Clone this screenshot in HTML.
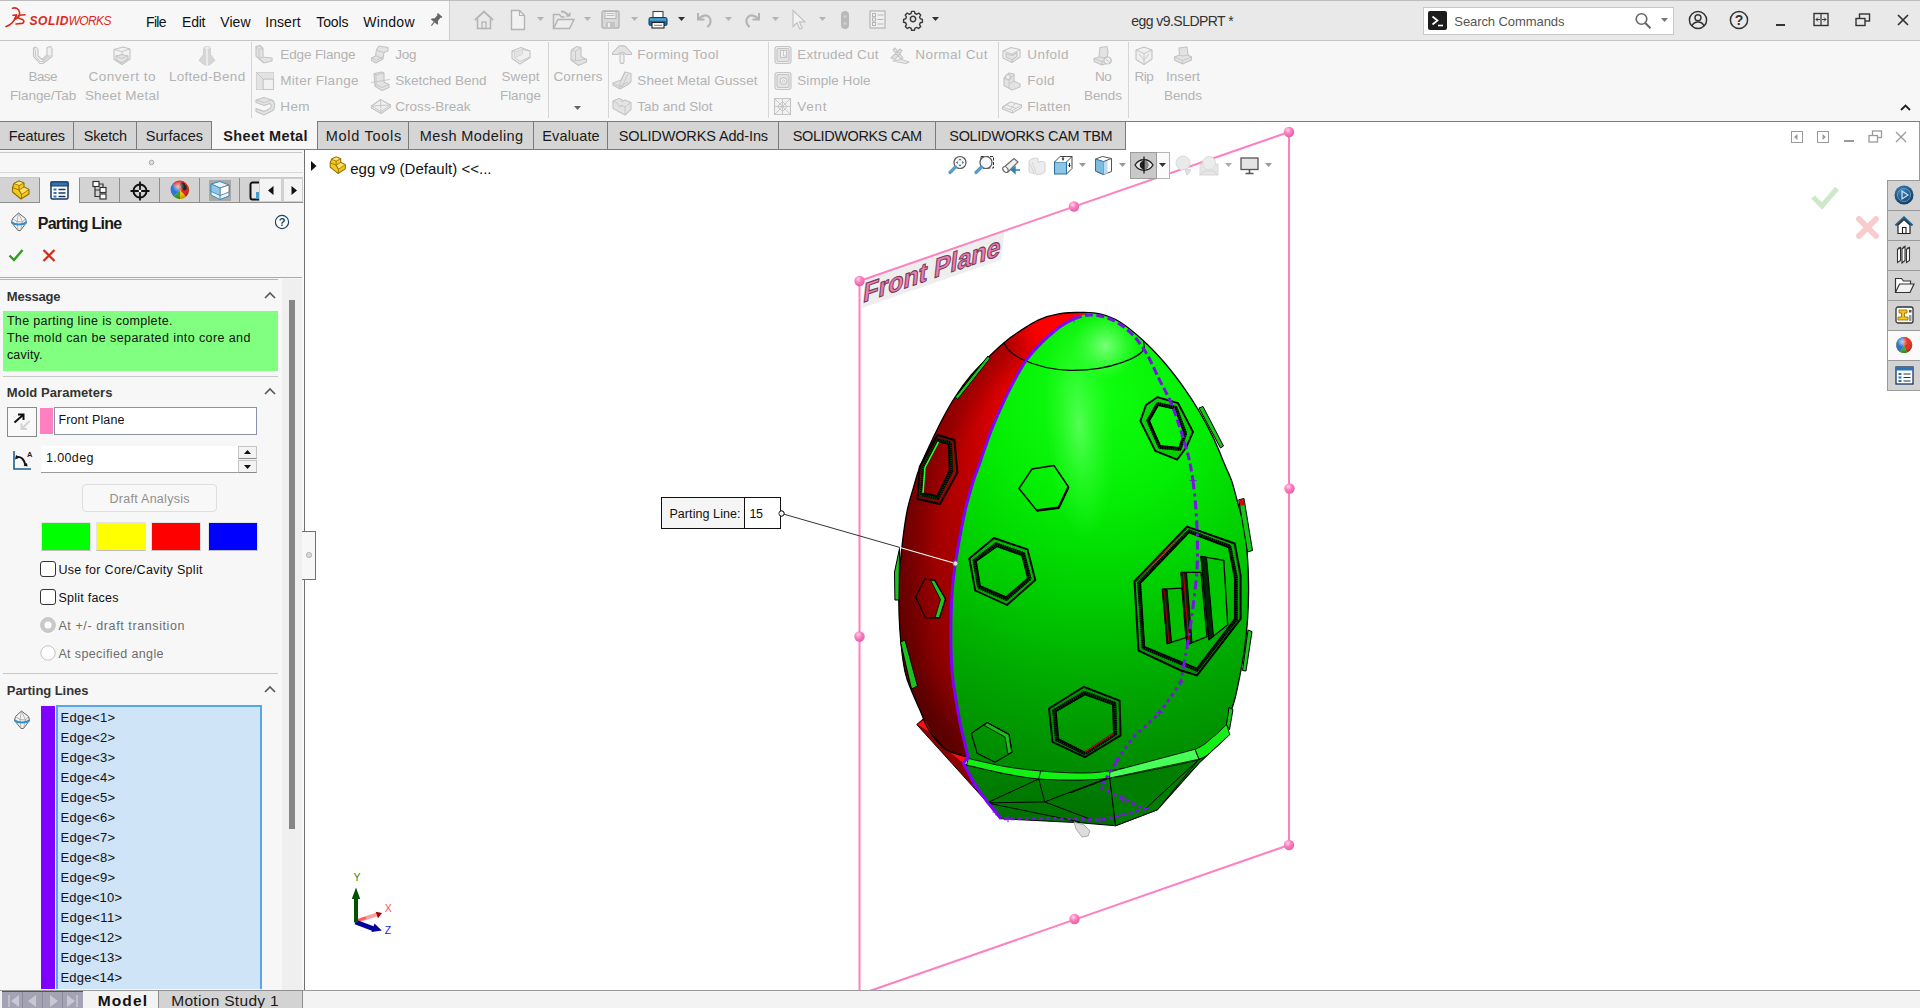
<!DOCTYPE html>
<html lang="en"><head><meta charset="utf-8"><title>SOLIDWORKS - egg v9.SLDPRT</title>
<style>
html,body{margin:0;padding:0;}
body{width:1920px;height:1008px;overflow:hidden;background:#fff;position:relative;font-family:"Liberation Sans",sans-serif;}
.r{position:absolute;display:block;}
.t{position:absolute;white-space:nowrap;}
svg{overflow:visible;}
</style></head>
<body>
<!-- viewport graphics -->
<div class="t" style="left:862px;top:279.800px;font-size:26.5px;line-height:28px;font-weight:bold;color:#f27cb4;-webkit-text-stroke:1.100px #6e4058;background:#eeeeee;transform-origin:0 100%;transform:skewY(-19.100deg) scaleX(0.940) skewX(-7deg);padding:0 2px 0 0;">Front Plane</div>
<svg class="r" style="left:0;top:0" width="1920" height="1008" viewBox="0 0 1920 1008"><defs><radialGradient id="pk" cx=".38" cy=".32" r=".7"><stop offset="0" stop-color="#ffd6ec"/><stop offset=".45" stop-color="#ff80c0"/><stop offset="1" stop-color="#e060a8"/></radialGradient></defs><path d="M859.5,995V281L1289,132V845L859.5,994.500" fill="none" stroke="#ff80c0" stroke-width="2"/><circle cx="859.5" cy="281" r="5.200" fill="url(#pk)"/><circle cx="1289" cy="132" r="5.200" fill="url(#pk)"/><circle cx="1289" cy="845" r="5.200" fill="url(#pk)"/><circle cx="1074" cy="206.5" r="5.200" fill="url(#pk)"/><circle cx="1289.5" cy="488.5" r="5.200" fill="url(#pk)"/><circle cx="859.5" cy="636.5" r="5.200" fill="url(#pk)"/><circle cx="1074.5" cy="919" r="5.200" fill="url(#pk)"/><defs><radialGradient id="gG" gradientUnits="userSpaceOnUse" cx="1095" cy="395" r="430"><stop offset="0" stop-color="#10ff10"/><stop offset=".25" stop-color="#04ee04"/><stop offset=".48" stop-color="#00cc00"/><stop offset=".68" stop-color="#00a800"/><stop offset=".86" stop-color="#008e00"/><stop offset="1" stop-color="#007e00"/></radialGradient><radialGradient id="gH1" gradientUnits="userSpaceOnUse" cx="1105" cy="346" r="34"><stop offset="0" stop-color="#7aff7a"/><stop offset=".4" stop-color="#5cff5c" stop-opacity=".7"/><stop offset="1" stop-color="#40ff40" stop-opacity="0"/></radialGradient><radialGradient id="gH2" gradientUnits="userSpaceOnUse" cx="0" cy="0" r="1" gradientTransform="translate(1079 425) rotate(-4) scale(34 115)"><stop offset="0" stop-color="#60ff60" stop-opacity=".85"/><stop offset=".5" stop-color="#4cff4c" stop-opacity=".4"/><stop offset="1" stop-color="#3cff3c" stop-opacity="0"/></radialGradient><linearGradient id="gR" gradientUnits="userSpaceOnUse" x1="1060" y1="318" x2="900" y2="700"><stop offset="0" stop-color="#ff0000"/><stop offset=".07" stop-color="#ff0000"/><stop offset=".2" stop-color="#ea0000"/><stop offset=".34" stop-color="#cf0000"/><stop offset=".49" stop-color="#b60000"/><stop offset=".63" stop-color="#a80000"/><stop offset=".77" stop-color="#9a0000"/><stop offset=".93" stop-color="#8c0000"/><stop offset="1" stop-color="#820000"/></linearGradient><filter id="blr" x="-20%" y="-20%" width="140%" height="140%"><feGaussianBlur stdDeviation="13"/></filter><filter id="blg" x="-20%" y="-20%" width="140%" height="140%"><feGaussianBlur stdDeviation="16"/></filter><linearGradient id="gB" gradientUnits="userSpaceOnUse" x1="0" y1="765" x2="0" y2="826"><stop offset="0" stop-color="#008400"/><stop offset="1" stop-color="#006e00"/></linearGradient></defs><path d="M966.5,765.0L963.3,763.2L975.2,785.0L988.0,802.9L1001.0,818.7L1080.0,822.7L1115.6,825.7L1157.3,809.8L1199.0,763.2L1229.7,734.4L1229.7,734.4L1216.0,747.0L1199.0,759.2L1152.0,770.0L1109.7,778.0L1080.0,780.0L1038.7,779.0L1004.0,773.5L966.5,765.0Z" fill="url(#gB)" stroke="#000" stroke-width="1.100" stroke-linejoin="round"/><path d="M987,802.900L1038.700,779L1044.700,801.900ZM1044.700,801.900L1109.700,777L1115.600,825.700M1044.700,801.900L1090,819M987,802.900L1080,822M1197,761.200L1145.400,808.800L1115.600,825.700M1109.700,778L1070,793" fill="none" stroke="#000" stroke-width="1"/><path d="M1109.700,778L1199,759.200L1157.300,809.800L1115.600,825.700Z" fill="#007e00" stroke="#000" stroke-width="1"/><path d="M1197,761.200L1145.400,808.800" stroke="#000" stroke-width="1"/><path d="M1080.0,312.3C1076.4,312.6 1065.5,312.6 1058.6,313.9C1051.7,315.1 1045.3,316.8 1038.7,319.8C1032.1,322.8 1024.7,327.9 1018.9,331.7C1013.1,335.5 1009.3,338.2 1004.0,342.7C998.7,347.2 992.5,353.1 987.0,358.5C981.5,363.9 976.6,368.7 971.3,375.0C966.0,381.3 960.0,389.5 955.4,396.5C950.8,403.5 947.1,410.3 943.5,417.0C939.9,423.7 937.6,428.5 933.6,436.9C929.6,445.3 923.1,458.9 919.7,467.5C916.3,476.1 915.3,481.4 913.2,488.5C911.1,495.6 909.0,501.5 907.3,510.0C905.6,518.5 904.0,529.6 902.8,539.5C901.5,549.4 900.5,559.4 899.8,569.3C899.1,579.2 898.8,589.1 898.8,599.0C898.8,608.9 899.1,618.9 899.8,628.8C900.5,638.7 901.6,650.2 902.8,658.6C904.0,667.0 904.2,670.5 907.0,679.0C909.8,687.5 915.9,700.9 919.7,709.6C923.5,718.3 925.3,724.8 929.6,731.4C933.9,738.0 939.5,745.1 945.5,749.3C951.5,753.5 962.0,755.3 965.3,756.5L968.3,758.5C974.4,759.8 992.9,764.4 1005.0,766.5C1017.1,768.6 1028.2,769.9 1040.7,771.0C1053.2,772.1 1068.8,773.0 1080.0,773.0C1091.2,773.0 1096.3,772.8 1108.0,771.0C1119.7,769.2 1135.5,766.1 1150.0,762.5C1164.5,758.9 1184.5,753.5 1195.0,749.3C1205.5,745.0 1207.7,741.1 1213.0,737.0C1218.3,732.9 1224.4,726.6 1226.7,724.5C1227.0,723.3 1227.4,721.6 1228.7,717.5C1230.0,713.4 1232.7,707.3 1234.7,699.7C1236.7,692.1 1238.9,680.5 1240.6,672.0C1242.2,663.5 1243.4,657.6 1244.6,648.7C1245.8,639.9 1246.9,628.9 1247.6,618.9C1248.3,608.9 1248.6,598.9 1248.6,589.0C1248.6,579.1 1248.3,569.3 1247.6,559.4C1246.9,549.5 1246.4,539.5 1244.6,529.6C1242.8,519.7 1239.2,508.1 1237.0,500.0C1234.8,491.9 1233.7,486.9 1231.7,481.0C1229.7,475.1 1227.9,472.1 1224.8,464.7C1221.7,457.3 1217.2,445.8 1212.9,436.9C1208.6,427.9 1203.7,418.9 1199.0,411.0C1194.3,403.1 1190.6,397.2 1185.0,389.3C1179.4,381.4 1172.1,371.6 1165.2,363.5C1158.3,355.4 1151.0,347.6 1143.4,340.7C1135.8,333.8 1126.9,326.3 1119.6,321.8C1112.3,317.3 1106.4,315.5 1099.8,313.9C1093.2,312.3 1083.3,312.6 1080.0,312.3Z" fill="url(#gG)"/><path d="M1080.0,312.3C1076.4,312.6 1065.5,312.6 1058.6,313.9C1051.7,315.1 1045.3,316.8 1038.7,319.8C1032.1,322.8 1024.7,327.9 1018.9,331.7C1013.1,335.5 1009.3,338.2 1004.0,342.7C998.7,347.2 992.5,353.1 987.0,358.5C981.5,363.9 976.6,368.7 971.3,375.0C966.0,381.3 960.0,389.5 955.4,396.5C950.8,403.5 947.1,410.3 943.5,417.0C939.9,423.7 937.6,428.5 933.6,436.9C929.6,445.3 923.1,458.9 919.7,467.5C916.3,476.1 915.3,481.4 913.2,488.5C911.1,495.6 909.0,501.5 907.3,510.0C905.6,518.5 904.0,529.6 902.8,539.5C901.5,549.4 900.5,559.4 899.8,569.3C899.1,579.2 898.8,589.1 898.8,599.0C898.8,608.9 899.1,618.9 899.8,628.8C900.5,638.7 901.6,650.2 902.8,658.6C904.0,667.0 904.2,670.5 907.0,679.0C909.8,687.5 915.9,700.9 919.7,709.6C923.5,718.3 925.3,724.8 929.6,731.4C933.9,738.0 939.5,745.1 945.5,749.3C951.5,753.5 962.0,755.3 965.3,756.5L968.3,758.5C974.4,759.8 992.9,764.4 1005.0,766.5C1017.1,768.6 1028.2,769.9 1040.7,771.0C1053.2,772.1 1068.8,773.0 1080.0,773.0C1091.2,773.0 1096.3,772.8 1108.0,771.0C1119.7,769.2 1135.5,766.1 1150.0,762.5C1164.5,758.9 1184.5,753.5 1195.0,749.3C1205.5,745.0 1207.7,741.1 1213.0,737.0C1218.3,732.9 1224.4,726.6 1226.7,724.5C1227.0,723.3 1227.4,721.6 1228.7,717.5C1230.0,713.4 1232.7,707.3 1234.7,699.7C1236.7,692.1 1238.9,680.5 1240.6,672.0C1242.2,663.5 1243.4,657.6 1244.6,648.7C1245.8,639.9 1246.9,628.9 1247.6,618.9C1248.3,608.9 1248.6,598.9 1248.6,589.0C1248.6,579.1 1248.3,569.3 1247.6,559.4C1246.9,549.5 1246.4,539.5 1244.6,529.6C1242.8,519.7 1239.2,508.1 1237.0,500.0C1234.8,491.9 1233.7,486.9 1231.7,481.0C1229.7,475.1 1227.9,472.1 1224.8,464.7C1221.7,457.3 1217.2,445.8 1212.9,436.9C1208.6,427.9 1203.7,418.9 1199.0,411.0C1194.3,403.1 1190.6,397.2 1185.0,389.3C1179.4,381.4 1172.1,371.6 1165.2,363.5C1158.3,355.4 1151.0,347.6 1143.4,340.7C1135.8,333.8 1126.9,326.3 1119.6,321.8C1112.3,317.3 1106.4,315.5 1099.8,313.9C1093.2,312.3 1083.3,312.6 1080.0,312.3Z" fill="url(#gH2)"/><path d="M1080.0,312.3C1076.4,312.6 1065.5,312.6 1058.6,313.9C1051.7,315.1 1045.3,316.8 1038.7,319.8C1032.1,322.8 1024.7,327.9 1018.9,331.7C1013.1,335.5 1009.3,338.2 1004.0,342.7C998.7,347.2 992.5,353.1 987.0,358.5C981.5,363.9 976.6,368.7 971.3,375.0C966.0,381.3 960.0,389.5 955.4,396.5C950.8,403.5 947.1,410.3 943.5,417.0C939.9,423.7 937.6,428.5 933.6,436.9C929.6,445.3 923.1,458.9 919.7,467.5C916.3,476.1 915.3,481.4 913.2,488.5C911.1,495.6 909.0,501.5 907.3,510.0C905.6,518.5 904.0,529.6 902.8,539.5C901.5,549.4 900.5,559.4 899.8,569.3C899.1,579.2 898.8,589.1 898.8,599.0C898.8,608.9 899.1,618.9 899.8,628.8C900.5,638.7 901.6,650.2 902.8,658.6C904.0,667.0 904.2,670.5 907.0,679.0C909.8,687.5 915.9,700.9 919.7,709.6C923.5,718.3 925.3,724.8 929.6,731.4C933.9,738.0 939.5,745.1 945.5,749.3C951.5,753.5 962.0,755.3 965.3,756.5L968.3,758.5C974.4,759.8 992.9,764.4 1005.0,766.5C1017.1,768.6 1028.2,769.9 1040.7,771.0C1053.2,772.1 1068.8,773.0 1080.0,773.0C1091.2,773.0 1096.3,772.8 1108.0,771.0C1119.7,769.2 1135.5,766.1 1150.0,762.5C1164.5,758.9 1184.5,753.5 1195.0,749.3C1205.5,745.0 1207.7,741.1 1213.0,737.0C1218.3,732.9 1224.4,726.6 1226.7,724.5C1227.0,723.3 1227.4,721.6 1228.7,717.5C1230.0,713.4 1232.7,707.3 1234.7,699.7C1236.7,692.1 1238.9,680.5 1240.6,672.0C1242.2,663.5 1243.4,657.6 1244.6,648.7C1245.8,639.9 1246.9,628.9 1247.6,618.9C1248.3,608.9 1248.6,598.9 1248.6,589.0C1248.6,579.1 1248.3,569.3 1247.6,559.4C1246.9,549.5 1246.4,539.5 1244.6,529.6C1242.8,519.7 1239.2,508.1 1237.0,500.0C1234.8,491.9 1233.7,486.9 1231.7,481.0C1229.7,475.1 1227.9,472.1 1224.8,464.7C1221.7,457.3 1217.2,445.8 1212.9,436.9C1208.6,427.9 1203.7,418.9 1199.0,411.0C1194.3,403.1 1190.6,397.2 1185.0,389.3C1179.4,381.4 1172.1,371.6 1165.2,363.5C1158.3,355.4 1151.0,347.6 1143.4,340.7C1135.8,333.8 1126.9,326.3 1119.6,321.8C1112.3,317.3 1106.4,315.5 1099.8,313.9C1093.2,312.3 1083.3,312.6 1080.0,312.3Z" fill="url(#gH1)"/><path d="M968.3,758.5C974.4,759.8 992.9,764.4 1005.0,766.5C1017.1,768.6 1028.2,769.9 1040.7,771.0C1053.2,772.1 1068.8,773.0 1080.0,773.0C1091.2,773.0 1096.3,772.8 1108.0,771.0C1119.7,769.2 1135.5,766.1 1150.0,762.5C1164.5,758.9 1184.5,753.5 1195.0,749.3C1205.5,745.0 1207.7,741.1 1213.0,737.0C1218.3,732.9 1224.4,726.6 1226.7,724.5L1229.7,734.4C1227.4,736.5 1221.1,742.9 1216.0,747.0C1210.9,751.1 1209.7,755.4 1199.0,759.2C1188.3,763.0 1166.9,766.9 1152.0,770.0C1137.1,773.1 1121.7,776.3 1109.7,778.0C1097.7,779.7 1091.8,779.8 1080.0,780.0C1068.2,780.2 1051.4,780.1 1038.7,779.0C1026.0,777.9 1016.0,775.8 1004.0,773.5C992.0,771.2 972.8,766.4 966.5,765.0Z" fill="#14f014" stroke="#000" stroke-width=".9" stroke-linejoin="round"/><path d="M1109.700,772L1195,749.300L1199,759.200L1109.700,778Z" fill="#48ff58" stroke="#000" stroke-width=".8"/><path d="M1040.700,771L1038.700,779M1195,749.300L1199,759.200" stroke="#000" stroke-width=".9"/><path d="M1088.0,313.2L1080.0,312.3C1076.4,312.6 1065.5,312.6 1058.6,313.9C1051.7,315.1 1045.3,316.8 1038.7,319.8C1032.1,322.8 1024.7,327.9 1018.9,331.7C1013.1,335.5 1009.3,338.2 1004.0,342.7C998.7,347.2 992.5,353.1 987.0,358.5C981.5,363.9 976.6,368.7 971.3,375.0C966.0,381.3 960.0,389.5 955.4,396.5C950.8,403.5 947.1,410.3 943.5,417.0C939.9,423.7 937.6,428.5 933.6,436.9C929.6,445.3 923.1,458.9 919.7,467.5C916.3,476.1 915.3,481.4 913.2,488.5C911.1,495.6 909.0,501.5 907.3,510.0C905.6,518.5 904.0,529.6 902.8,539.5C901.5,549.4 900.5,559.4 899.8,569.3C899.1,579.2 898.8,589.1 898.8,599.0C898.8,608.9 899.1,618.9 899.8,628.8C900.5,638.7 901.6,650.2 902.8,658.6C904.0,667.0 904.2,670.5 907.0,679.0C909.8,687.5 915.9,700.9 919.7,709.6C923.5,718.3 925.3,724.8 929.6,731.4C933.9,738.0 939.5,745.1 945.5,749.3C951.5,753.5 962.0,755.3 965.3,756.5L968.3,757.2C967.8,755.2 966.8,751.6 965.3,745.3C963.8,739.0 961.2,728.8 959.4,719.5C957.6,710.2 955.6,697.2 954.4,689.8C953.2,682.4 953.0,681.9 952.4,675.0C951.8,668.1 951.2,658.1 951.0,648.7C950.8,639.4 950.8,628.9 951.0,618.9C951.2,608.9 951.7,598.3 952.4,589.0C953.1,579.7 954.2,571.5 955.4,563.3C956.6,555.0 957.8,548.4 959.4,539.5C961.0,530.6 963.0,519.5 965.3,509.8C967.6,500.1 971.0,488.5 973.3,481.0C975.6,473.5 976.2,473.0 979.2,464.7C982.2,456.4 987.0,441.2 991.0,431.0C995.0,420.8 999.0,411.8 1003.0,403.2C1007.0,394.6 1010.9,386.7 1014.9,379.4C1018.9,372.1 1022.8,365.1 1026.8,359.5C1030.8,353.9 1033.4,350.9 1038.7,345.6C1044.0,340.3 1052.7,332.3 1058.6,327.8C1064.5,323.3 1069.1,321.2 1074.0,318.8C1078.9,316.4 1085.7,314.1 1088.0,313.2Z" fill="url(#gR)"/><clipPath id="cpR"><path d="M1088.0,313.2L1080.0,312.3C1076.4,312.6 1065.5,312.6 1058.6,313.9C1051.7,315.1 1045.3,316.8 1038.7,319.8C1032.1,322.8 1024.7,327.9 1018.9,331.7C1013.1,335.5 1009.3,338.2 1004.0,342.7C998.7,347.2 992.5,353.1 987.0,358.5C981.5,363.9 976.6,368.7 971.3,375.0C966.0,381.3 960.0,389.5 955.4,396.5C950.8,403.5 947.1,410.3 943.5,417.0C939.9,423.7 937.6,428.5 933.6,436.9C929.6,445.3 923.1,458.9 919.7,467.5C916.3,476.1 915.3,481.4 913.2,488.5C911.1,495.6 909.0,501.5 907.3,510.0C905.6,518.5 904.0,529.6 902.8,539.5C901.5,549.4 900.5,559.4 899.8,569.3C899.1,579.2 898.8,589.1 898.8,599.0C898.8,608.9 899.1,618.9 899.8,628.8C900.5,638.7 901.6,650.2 902.8,658.6C904.0,667.0 904.2,670.5 907.0,679.0C909.8,687.5 915.9,700.9 919.7,709.6C923.5,718.3 925.3,724.8 929.6,731.4C933.9,738.0 939.5,745.1 945.5,749.3C951.5,753.5 962.0,755.3 965.3,756.5L968.3,757.2C967.8,755.2 966.8,751.6 965.3,745.3C963.8,739.0 961.2,728.8 959.4,719.5C957.6,710.2 955.6,697.2 954.4,689.8C953.2,682.4 953.0,681.9 952.4,675.0C951.8,668.1 951.2,658.1 951.0,648.7C950.8,639.4 950.8,628.9 951.0,618.9C951.2,608.9 951.7,598.3 952.4,589.0C953.1,579.7 954.2,571.5 955.4,563.3C956.6,555.0 957.8,548.4 959.4,539.5C961.0,530.6 963.0,519.5 965.3,509.8C967.6,500.1 971.0,488.5 973.3,481.0C975.6,473.5 976.2,473.0 979.2,464.7C982.2,456.4 987.0,441.2 991.0,431.0C995.0,420.8 999.0,411.8 1003.0,403.2C1007.0,394.6 1010.9,386.7 1014.9,379.4C1018.9,372.1 1022.8,365.1 1026.8,359.5C1030.8,353.9 1033.4,350.9 1038.7,345.6C1044.0,340.3 1052.7,332.3 1058.6,327.8C1064.5,323.3 1069.1,321.2 1074.0,318.8C1078.9,316.4 1085.7,314.1 1088.0,313.2Z"/></clipPath><g clip-path="url(#cpR)"><path d="M1018.9,331.7C1016.4,333.5 1009.3,338.2 1004.0,342.7C998.7,347.2 992.5,353.1 987.0,358.5C981.5,363.9 976.6,368.7 971.3,375.0C966.0,381.3 960.0,389.5 955.4,396.5C950.8,403.5 947.1,410.3 943.5,417.0C939.9,423.7 937.6,428.5 933.6,436.9C929.6,445.3 923.1,458.9 919.7,467.5C916.3,476.1 915.3,481.4 913.2,488.5C911.1,495.6 909.0,501.5 907.3,510.0C905.6,518.5 904.0,529.6 902.8,539.5C901.5,549.4 900.5,559.4 899.8,569.3C899.1,579.2 898.8,589.1 898.8,599.0C898.8,608.9 899.1,618.9 899.8,628.8C900.5,638.7 901.6,650.2 902.8,658.6C904.0,667.0 904.2,670.5 907.0,679.0C909.8,687.5 915.9,700.9 919.7,709.6C923.5,718.3 925.3,724.8 929.6,731.4C933.9,738.0 939.5,745.1 945.5,749.3C951.5,753.5 962.0,755.3 965.3,756.5" fill="none" stroke="#000" stroke-opacity=".34" stroke-width="44" filter="url(#blr)"/></g><path d="M916.700,724.500L923.700,718.500L929.600,731.400L945.500,749.300L965.300,756.500L963.300,763.200L985,800Z" fill="#8c0000" stroke="#000" stroke-width=".9" stroke-linejoin="round"/><path d="M917.700,724.500L924.600,719.500L931.600,733.400Z" fill="#ff1010"/><path d="M947.500,750.300L967.300,757.200L963.300,763.200Z" fill="#ff1010"/><path d="M965.3,756.5C962.0,755.3 951.5,753.5 945.5,749.3C939.5,745.1 933.9,738.0 929.6,731.4C925.3,724.8 923.5,718.3 919.7,709.6C915.9,700.9 909.8,687.5 907.0,679.0C904.2,670.5 904.0,667.0 902.8,658.6C901.6,650.2 900.5,638.7 899.8,628.8C899.1,618.9 898.8,608.9 898.8,599.0C898.8,589.1 899.1,579.2 899.8,569.3C900.5,559.4 901.5,549.4 902.8,539.5C904.0,529.6 905.6,518.5 907.3,510.0C909.0,501.5 911.1,495.6 913.2,488.5C915.3,481.4 916.3,476.1 919.7,467.5C923.1,458.9 929.6,445.3 933.6,436.9C937.6,428.5 939.9,423.7 943.5,417.0C947.1,410.3 950.8,403.5 955.4,396.5C960.0,389.5 966.0,381.3 971.3,375.0C976.6,368.7 981.5,363.9 987.0,358.5C992.5,353.1 998.7,347.2 1004.0,342.7C1009.3,338.2 1013.1,335.5 1018.9,331.7C1024.7,327.9 1032.1,322.8 1038.7,319.8C1045.3,316.8 1051.7,315.1 1058.6,313.9C1065.5,312.6 1076.4,312.6 1080.0,312.3C1083.3,312.6 1093.2,312.3 1099.8,313.9C1106.4,315.5 1112.3,317.3 1119.6,321.8C1126.9,326.3 1135.8,333.8 1143.4,340.7C1151.0,347.6 1158.3,355.4 1165.2,363.5C1172.1,371.6 1179.4,381.4 1185.0,389.3C1190.6,397.2 1194.3,403.1 1199.0,411.0C1203.7,418.9 1208.6,427.9 1212.9,436.9C1217.2,445.8 1221.7,457.3 1224.8,464.7C1227.9,472.1 1229.7,475.1 1231.7,481.0C1233.7,486.9 1234.8,491.9 1237.0,500.0C1239.2,508.1 1242.8,519.7 1244.6,529.6C1246.4,539.5 1246.9,549.5 1247.6,559.4C1248.3,569.3 1248.6,579.1 1248.6,589.0C1248.6,598.9 1248.3,608.9 1247.6,618.9C1246.9,628.9 1245.8,639.9 1244.6,648.7C1243.4,657.6 1242.2,663.5 1240.6,672.0C1238.9,680.5 1236.7,692.1 1234.7,699.7C1232.7,707.3 1230.0,713.4 1228.7,717.5C1227.4,721.6 1227.0,723.3 1226.7,724.5" fill="none" stroke="#000" stroke-width="1.300"/><path d="M1004,342.700C1008,354 1030,368 1070,370.400C1112,371 1143,356 1144.400,347.600L1143.400,340.700" fill="none" stroke="#000" stroke-width="1.100"/><path d="M1157.3,397.2L1178.1,403.2L1193.0,431.9L1186.0,447.8L1177.1,459.7L1155.3,450.8L1140.4,421.0L1146.0,405.0ZM1158.3,405.2L1175.2,409.1L1184.0,432.9L1179.0,447.8L1160.3,445.8L1149.4,421.0Z" fill="#003000" fill-opacity=".16" fill-rule="evenodd"/><path d="M1157.3,397.2L1178.1,403.2L1193.0,431.9L1186.0,447.8L1177.1,459.7L1155.3,450.8L1140.4,421.0L1146.0,405.0Z" fill="none" stroke="#000" stroke-width="1.9" stroke-linejoin="round"/><path d="M1157.7,403.7L1175.8,407.6L1185.5,433.4L1179.8,449.2L1159.7,447.3L1147.9,420.5Z" fill="none" stroke="#064006" stroke-width="3.200" stroke-linejoin="round"/><path d="M1157.7,403.7L1175.8,407.6L1185.5,433.4L1179.8,449.2L1159.7,447.3L1147.9,420.5Z" fill="none" stroke="#000" stroke-width="3.200" stroke-linejoin="round" stroke-dasharray="1.300 .9"/><path d="M1158.3,405.2L1175.2,409.1L1184.0,432.9L1179.0,447.8L1160.3,445.8L1149.4,421.0Z" fill="none" stroke="#000" stroke-width="1.4" stroke-linejoin="round"/><path d="M1032.0,469.0L1054.0,465.5L1068.5,487.0L1058.6,507.8L1036.7,510.5L1019.0,488.5Z" fill="none" stroke="#000" stroke-width="1.400" stroke-linejoin="round"/><path d="M1036.700,510.500L1058.600,507.800L1068.500,487" fill="none" stroke="#000" stroke-width="2.400" stroke-linejoin="round"/><path d="M994.0,538.0L1027.5,549.4L1035.3,580.0L1007.0,605.0L975.2,590.5L969.3,558.5ZM997.0,546.5L1021.9,555.4L1027.8,578.2L1006.0,597.0L980.2,586.0L976.2,561.3Z" fill="#003000" fill-opacity=".16" fill-rule="evenodd"/><path d="M994.0,538.0L1027.5,549.4L1035.3,580.0L1007.0,605.0L975.2,590.5L969.3,558.5Z" fill="none" stroke="#000" stroke-width="1.9" stroke-linejoin="round"/><path d="M996.2,544.1L1023.5,553.7L1029.9,578.7L1006.3,599.2L978.8,587.3L974.3,560.5Z" fill="none" stroke="#064006" stroke-width="3.200" stroke-linejoin="round"/><path d="M996.2,544.1L1023.5,553.7L1029.9,578.7L1006.3,599.2L978.8,587.3L974.3,560.5Z" fill="none" stroke="#000" stroke-width="3.200" stroke-linejoin="round" stroke-dasharray="1.300 .9"/><path d="M997.0,546.5L1021.9,555.4L1027.8,578.2L1006.0,597.0L980.2,586.0L976.2,561.3Z" fill="none" stroke="#000" stroke-width="1.4" stroke-linejoin="round"/><path d="M937.5,435.0L954.4,440.0L957.4,472.6L940.0,504.0L917.5,499.0L919.7,466.7ZM938.5,441.9L948.5,443.8L949.4,470.6L937.0,496.0L923.0,493.0L925.0,467.5Z" fill="#003000" fill-opacity=".16" fill-rule="evenodd"/><path d="M937.5,435.0L954.4,440.0L957.4,472.6L940.0,504.0L917.5,499.0L919.7,466.7Z" fill="none" stroke="#000" stroke-width="1.9" stroke-linejoin="round"/><path d="M938.2,440.0L950.2,442.7L951.6,471.2L937.8,498.2L921.5,494.7L923.5,467.3Z" fill="none" stroke="#064006" stroke-width="3.200" stroke-linejoin="round"/><path d="M938.2,440.0L950.2,442.7L951.6,471.2L937.8,498.2L921.5,494.7L923.5,467.3Z" fill="none" stroke="#000" stroke-width="3.200" stroke-linejoin="round" stroke-dasharray="1.300 .9"/><path d="M938.5,441.9L948.5,443.8L949.4,470.6L937.0,496.0L923.0,493.0L925.0,467.5Z" fill="none" stroke="#000" stroke-width="1.4" stroke-linejoin="round"/><path d="M923,493L925,467.500L938.500,441.900" fill="none" stroke="#30ff30" stroke-width="1.600"/><path d="M934.600,580.200L945.500,599L939.500,617.900L935,617.900L940.500,599.500L930.500,580Z" fill="#1ec81e" stroke="#000" stroke-width=".8"/><path d="M924.6,579.2L934.6,580.2L945.5,599.0L939.5,617.9L925.6,617.9L915.7,597.0Z" fill="none" stroke="#000" stroke-width="1.200" stroke-linejoin="round"/><path d="M1083.9,686.8L1119.6,700.7L1120.6,735.4L1084.9,757.2L1052.5,742.0L1049.0,708.5ZM1084.9,694.7L1112.7,704.6L1113.7,733.4L1084.9,752.3L1058.5,739.0L1056.0,711.5Z" fill="#003000" fill-opacity=".16" fill-rule="evenodd"/><path d="M1083.9,686.8L1119.6,700.7L1120.6,735.4L1084.9,757.2L1052.5,742.0L1049.0,708.5Z" fill="none" stroke="#000" stroke-width="1.9" stroke-linejoin="round"/><path d="M1084.6,692.5L1114.6,703.5L1115.6,734.0L1084.9,753.7L1056.8,739.8L1054.0,710.7Z" fill="none" stroke="#064006" stroke-width="3.200" stroke-linejoin="round"/><path d="M1084.6,692.5L1114.6,703.5L1115.6,734.0L1084.9,753.7L1056.8,739.8L1054.0,710.7Z" fill="none" stroke="#000" stroke-width="3.200" stroke-linejoin="round" stroke-dasharray="1.300 .9"/><path d="M1084.9,694.7L1112.7,704.6L1113.7,733.4L1084.9,752.3L1058.5,739.0L1056.0,711.5Z" fill="none" stroke="#000" stroke-width="1.4" stroke-linejoin="round"/><path d="M1084.900,752.300L1113.700,733.400" stroke="#e00000" stroke-width="1.200"/><path d="M987,722.500L1009,734.400L1012,752.300L1008,754L1005,737L984.500,725.500Z" fill="#18c018" stroke="#000" stroke-width=".8"/><path d="M987.0,722.5L1009.0,734.4L1012.0,752.3L995.0,762.2L977.2,753.3L971.3,733.4Z" fill="none" stroke="#000" stroke-width="1.200" stroke-linejoin="round"/><path d="M1187.0,526.6L1234.7,543.5L1240.6,575.2L1240.6,618.9L1197.0,675.4L1181.0,670.5L1138.5,650.6L1134.5,581.2ZM1189.0,532.6L1228.7,547.5L1234.7,578.0L1234.7,618.9L1197.0,668.5L1144.4,646.7L1140.4,583.2Z" fill="#003000" fill-opacity=".16" fill-rule="evenodd"/><path d="M1187.0,526.6L1234.7,543.5L1240.6,575.2L1240.6,618.9L1197.0,675.4L1181.0,670.5L1138.5,650.6L1134.5,581.2Z" fill="none" stroke="#000" stroke-width="2.0" stroke-linejoin="round"/><path d="M1188.8,531.0L1229.6,546.2L1236.1,577.3L1236.1,619.7L1197.0,670.1L1143.3,647.8L1138.8,582.8Z" fill="none" stroke="#064006" stroke-width="3.200" stroke-linejoin="round"/><path d="M1188.8,531.0L1229.6,546.2L1236.1,577.3L1236.1,619.7L1197.0,670.1L1143.3,647.8L1138.8,582.8Z" fill="none" stroke="#000" stroke-width="3.200" stroke-linejoin="round" stroke-dasharray="1.300 .9"/><path d="M1189.0,532.6L1228.7,547.5L1234.7,578.0L1234.7,618.9L1197.0,668.5L1144.4,646.7L1140.4,583.2Z" fill="none" stroke="#000" stroke-width="1.5" stroke-linejoin="round"/><path d="M1162.300,589.100L1182,588.100L1186,637.700L1167.200,643.700Z" fill="#00c000" stroke="#000" stroke-width="1.300" stroke-linejoin="round"/><path d="M1181,572.300L1201,572.300L1207,636.700L1187,644.700Z" fill="#00c400" stroke="#000" stroke-width="1.300" stroke-linejoin="round"/><path d="M1201,556.400L1223.800,560.400L1227.700,624.800L1208.900,639.700Z" fill="#00c800" stroke="#000" stroke-width="1.300" stroke-linejoin="round"/><path d="M1162.300,589.100L1167,589.500L1171.500,642.300L1167.200,643.700Z" fill="#022402" stroke="#000" stroke-width="1"/><path d="M1181,572.300L1186.500,572.800L1192,643L1187,644.700Z" fill="#022402" stroke="#000" stroke-width="1"/><path d="M1201,556.400L1206.500,557.300L1213.500,636.500L1208.900,639.700Z" fill="#022402" stroke="#000" stroke-width="1"/><path d="M1183.500,574L1189,643" stroke="#c00000" stroke-width="1.200"/><path d="M1164.300,590L1169,643" stroke="#a00000" stroke-width="1"/><path d="M1136,582L1187.500,528.500" stroke="#c00000" stroke-width="1"/><path d="M988.0,356.0L955.4,397.0L957.5,399.5L990.0,358.5Z" fill="#18c818" stroke="#000" stroke-width="1" stroke-linejoin="round"/><path d="M899.5,548.5L894.5,572.0L894.9,600.0L899.0,600.0Z" fill="#20c020" stroke="#000" stroke-width="1" stroke-linejoin="round"/><path d="M900.5,642.0L905.0,640.0L917.5,686.0L911.5,689.0Z" fill="#20c020" stroke="#000" stroke-width="1" stroke-linejoin="round"/><path d="M1199.0,408.0L1203.0,406.5L1223.5,446.0L1220.5,448.0Z" fill="#18c818" stroke="#000" stroke-width="1" stroke-linejoin="round"/><path d="M1238.7,499.8L1244.0,498.5L1252.5,550.5L1247.5,552.0Z" fill="#18c818" stroke="#000" stroke-width="1" stroke-linejoin="round"/><path d="M1248.0,630.0L1252.0,631.5L1246.0,671.0L1242.5,670.5Z" fill="#18c818" stroke="#000" stroke-width="1" stroke-linejoin="round"/><path d="M1229.0,707.5L1233.0,709.5L1229.5,729.5L1226.5,724.5Z" fill="#18c818" stroke="#000" stroke-width="1" stroke-linejoin="round"/><path d="M1239.500,500L1243.500,499L1244.500,505L1240.500,506Z" fill="#e00000"/><path d="M1074.0,318.8C1071.4,320.3 1064.5,323.3 1058.6,327.8C1052.7,332.3 1044.0,340.3 1038.7,345.6C1033.4,350.9 1030.8,353.9 1026.8,359.5C1022.8,365.1 1018.9,372.1 1014.9,379.4C1010.9,386.7 1007.0,394.6 1003.0,403.2C999.0,411.8 995.0,420.8 991.0,431.0C987.0,441.2 982.2,456.4 979.2,464.7C976.2,473.0 975.6,473.5 973.3,481.0C971.0,488.5 967.6,500.1 965.3,509.8C963.0,519.5 961.0,530.6 959.4,539.5C957.8,548.4 956.6,555.0 955.4,563.3C954.2,571.5 953.1,579.7 952.4,589.0C951.7,598.3 951.2,608.9 951.0,618.9C950.8,628.9 950.8,639.4 951.0,648.7C951.2,658.1 951.8,668.1 952.4,675.0C953.0,681.9 953.2,682.4 954.4,689.8C955.6,697.2 957.6,710.2 959.4,719.5C961.2,728.8 963.8,739.0 965.3,745.3C966.8,751.6 967.8,755.2 968.3,757.2L963.3,763.2L975.2,785.0L988.0,802.9L1001.0,818.7" fill="none" stroke="#8000ff" stroke-width="3" stroke-linejoin="round"/><path d="M1074.0,318.8C1076.6,318.1 1083.8,314.9 1089.8,314.9C1095.8,314.9 1103.1,316.0 1109.7,318.8C1116.3,321.6 1123.5,326.2 1129.5,331.7C1135.5,337.2 1140.4,343.7 1145.4,351.6C1150.4,359.6 1155.0,370.8 1159.3,379.4C1163.6,388.0 1167.6,394.6 1171.2,403.2C1174.8,411.8 1178.0,421.8 1181.0,431.0C1184.0,440.2 1187.0,450.4 1189.0,458.7C1191.0,467.0 1192.3,477.0 1193.0,480.6" fill="none" stroke="#7a14e6" stroke-width="3" stroke-dasharray="8 3.500"/><path d="M1193.0,480.6C1193.5,485.5 1195.3,500.0 1196.0,509.8C1196.7,519.6 1197.2,529.6 1197.4,539.5C1197.6,549.4 1197.6,559.4 1197.0,569.3C1196.4,579.2 1195.2,589.1 1194.0,599.0C1192.8,608.9 1191.5,618.9 1190.0,628.8C1188.5,638.7 1186.5,649.8 1185.0,658.6C1183.5,667.4 1181.7,677.9 1181.0,681.8" fill="none" stroke="#7a14e6" stroke-width="3" stroke-dasharray="9 4 3 4"/><path d="M1181.0,681.8C1177.4,686.9 1167.2,703.3 1159.3,712.6C1151.4,721.9 1140.6,729.3 1133.5,737.4C1126.4,745.5 1121.2,754.3 1116.6,761.2C1112.0,768.1 1108.3,774.7 1105.7,779.0C1103.1,783.3 1101.6,785.7 1100.8,787.0C1104.4,789.0 1115.2,795.3 1122.6,798.9C1130.0,802.5 1141.6,807.1 1145.4,808.8C1141.8,809.8 1131.2,813.0 1123.6,814.8C1116.0,816.6 1108.7,819.1 1099.8,819.7C1090.9,820.4 1086.5,818.9 1070.0,818.7C1053.5,818.5 1012.5,818.7 1001.0,818.7" fill="none" stroke="#7a14e6" stroke-width="3" stroke-dasharray="3.200 3.800"/><path d="M1070.5,318.8h7M1074,315.3v7" stroke="#7a14e6" stroke-width="1"/><path d="M1189.5,480.6h7M1193,477.1v7" stroke="#7a14e6" stroke-width="1"/><path d="M1177.5,681.8h7M1181,678.3v7" stroke="#7a14e6" stroke-width="1"/><path d="M1155.8,712.6h7M1159.3,709.1v7" stroke="#7a14e6" stroke-width="1"/><path d="M1113.1,761.2h7M1116.6,757.7v7" stroke="#7a14e6" stroke-width="1"/><path d="M1119.1,798.9h7M1122.6,795.4v7" stroke="#7a14e6" stroke-width="1"/><path d="M1120.1,814.8h7M1123.6,811.3v7" stroke="#7a14e6" stroke-width="1"/><path d="M1096.3,819.7h7M1099.8,816.2v7" stroke="#7a14e6" stroke-width="1"/><path d="M1004.5,818.7h7M1008,815.2v7" stroke="#7a14e6" stroke-width="1"/><path d="M971.7,785h7M975.2,781.5v7" stroke="#7a14e6" stroke-width="1"/><path d="M992.5,812h7M996,808.5v7" stroke="#7a14e6" stroke-width="1"/><path d="M781.500,513.500L900,547.500" stroke="#333" stroke-width="1"/><path d="M900,547.500L955.500,563.500" stroke="#fff" stroke-width="1.300"/><circle cx="781.500" cy="513.500" r="2.600" fill="#fff" stroke="#222" stroke-width="1"/><circle cx="955.500" cy="563.500" r="2.600" fill="#ddd" stroke="#666" stroke-width="1"/><path d="M357.500,920.800L376.500,914.600" stroke="#ffa0a0" stroke-width="3.800"/><path d="M356,921L366,917.800" stroke="#ff4040" stroke-width="2.500" stroke-opacity=".7"/><path d="M375.600,911.800L382,913L378,918.200Z" fill="#a40000"/><path d="M355.500,922L374,929" stroke="#00009c" stroke-width="4.600"/><path d="M374.500,923.600L381.800,930.600L371.500,932Z" fill="#00009c"/><path d="M356,922.500V897" stroke="#005200" stroke-width="4"/><path d="M351.800,899L356,887.500L360.200,899Z" fill="#005200"/><text x="353.500" y="881.200" font-family="Liberation Sans, sans-serif" font-size="10.500" fill="#188a18">Y</text><text x="384.800" y="912.200" font-family="Liberation Sans, sans-serif" font-size="10.500" fill="#ff5050">X</text><text x="384.800" y="934.200" font-family="Liberation Sans, sans-serif" font-size="10.500" fill="#2222ff">Z</text><path d="M1074,822l10,3l6,6l-2,5l-6,1l-6,-8z" fill="#ddd" stroke="#999" stroke-width=".8"/></svg>
<!-- chrome -->
<div class="r" style="left:0px;top:0px;width:1920px;height:41px;background:#e9e9e9;"></div>
<div class="r" style="left:0px;top:0px;width:449px;height:41px;background:#f7f7f7;"></div>
<div class="r" style="left:0px;top:0px;width:1920px;height:1px;background:#bdbdbd;"></div>
<div class="r" style="left:449px;top:1px;width:1px;height:39px;background:#d0d0d0;"></div>
<div class="r" style="left:0px;top:40px;width:1920px;height:1px;background:#c6c6c6;"></div>
<div class="r" style="left:0px;top:41px;width:1920px;height:80px;background:#f7f7f7;"></div>
<div class="r" style="left:0px;top:121px;width:1920px;height:1px;background:#7c7c7c;"></div>
<svg class="r" style="left:5px;top:6px;" width="22" height="22" viewBox="0 0 22 22"><g fill="none" stroke="#da291c" stroke-width="1.6" stroke-linecap="round" stroke-linejoin="round">
<path d="M7.5 2.2 C11 1.2 14 3 14.5 6.5 C15 10 12.5 12.5 9.5 13.5 L11.5 9 L8 9.2"/>
<path d="M1 20.5 C5 19.5 9 16.5 11.5 9"/>
<path d="M20 8.8 L14.5 9.2 C12.5 9.6 12.6 12 14.5 12.6 L17.5 13.6 C19.5 14.4 19.3 17 17 17.4 L11 18"/>
</g></svg>
<div class="t" style="left:29.4px;top:12.5px;font-size:12px;line-height:16px;color:#da291c;letter-spacing:0.60px;font-weight:bold;font-style:italic;">SOLID</div>
<div class="t" style="left:68.4px;top:12.5px;font-size:12px;line-height:16px;color:#da291c;letter-spacing:-0.56px;font-style:italic;">WORKS</div>
<div class="t" style="left:146.0px;top:12.8px;font-size:14px;line-height:18px;color:#111;letter-spacing:-0.67px;">File</div>
<div class="t" style="left:182.1px;top:12.8px;font-size:14px;line-height:18px;color:#111;letter-spacing:-0.29px;">Edit</div>
<div class="t" style="left:220.3px;top:12.8px;font-size:14px;line-height:18px;color:#111;letter-spacing:0.06px;">View</div>
<div class="t" style="left:265.3px;top:12.8px;font-size:14px;line-height:18px;color:#111;letter-spacing:0.05px;">Insert</div>
<div class="t" style="left:316.3px;top:12.8px;font-size:14px;line-height:18px;color:#111;letter-spacing:-0.11px;">Tools</div>
<div class="t" style="left:363.3px;top:12.8px;font-size:14px;line-height:18px;color:#111;letter-spacing:0.29px;">Window</div>
<svg class="r" style="left:428px;top:12px;" width="16" height="16" viewBox="0 0 16 16"><g transform="rotate(40 8 8)"><path d="M5 1.5h6v1.2l-1 .8v4l2.2 2.2v1.1H3.8V9.7L6 7.500v-4l-1-.8z" fill="#666"/><path d="M8 10.8v4.4" stroke="#666" stroke-width="1.2"/></g></svg>
<svg class="r" style="left:473px;top:9px;" width="22" height="22" viewBox="0 0 22 22"><path d="M2 11 L11 2.500 L20 11" fill="none" stroke="#b4b4b4" stroke-width="1.8"/><path d="M4.500 10v9.500h13V10" fill="none" stroke="#b4b4b4" stroke-width="1.6"/><rect x="9" y="13" width="4" height="6.500" fill="none" stroke="#b4b4b4" stroke-width="1.3"/></svg>
<svg class="r" style="left:509px;top:9px;" width="18" height="22" viewBox="0 0 18 22"><path d="M2.500 1.500h8l5 5v14h-13z" fill="#f2f2f2" stroke="#b4b4b4" stroke-width="1.4"/><path d="M10.500 1.500v5h5" fill="none" stroke="#b4b4b4" stroke-width="1.2"/></svg>
<svg class="r" style="left:552px;top:9px;" width="24" height="22" viewBox="0 0 24 22"><path d="M1.500 19.500v-14h6l2 2.500h3" fill="none" stroke="#b4b4b4" stroke-width="1.5"/><path d="M1.500 19.500l4.500-9h16l-4.500 9z" fill="#ededed" stroke="#b4b4b4" stroke-width="1.5"/><path d="M9 2.500c4 0 6 1.500 7.500 5" fill="none" stroke="#b4b4b4" stroke-width="1.8"/><path d="M13.500 7.500h5v-4.500z" fill="#b4b4b4"/></svg>
<svg class="r" style="left:601px;top:10px;" width="20" height="20" viewBox="0 0 20 20"><rect x="1" y="1" width="17" height="17" rx="1.500" fill="#d8d8d8" stroke="#b4b4b4" stroke-width="1.4"/><rect x="4" y="1.500" width="11" height="7" fill="#efefef" stroke="#b4b4b4" stroke-width="1"/><path d="M5.500 3.500h8M5.500 5.500h8" stroke="#b4b4b4" stroke-width=".8"/><rect x="5" y="12" width="9" height="6" fill="#c4c4c4"/><rect x="7" y="13" width="2" height="4" fill="#efefef"/></svg>
<svg class="r" style="left:648px;top:10px;" width="20" height="20" viewBox="0 0 20 20"><rect x="5" y="1.500" width="10" height="6.500" fill="#fff" stroke="#444" stroke-width="1.1"/><rect x="1" y="7.500" width="18" height="8" rx="1.500" fill="#1d6d9b" stroke="#0d3f5e" stroke-width="1"/><rect x="1.800" y="8.300" width="16.400" height="2.400" fill="#4fa3cf"/><rect x="4" y="12.500" width="12" height="5.500" fill="#fff" stroke="#222" stroke-width="1.1"/><path d="M6 15.300h8" stroke="#555" stroke-width=".8"/></svg>
<svg class="r" style="left:696px;top:11px;" width="18" height="18" viewBox="0 0 18 18"><path d="M2 2v6.500h6.500" fill="none" stroke="#b4b4b4" stroke-width="2"/><path d="M2.500 8c3.500-4 8-4.500 10.500-2 2.800 2.800 1.800 7.500-1.500 10" fill="none" stroke="#b4b4b4" stroke-width="2.200"/></svg>
<svg class="r" style="left:743px;top:11px;" width="18" height="18" viewBox="0 0 18 18"><path d="M16 2v6.500H9.500" fill="none" stroke="#b4b4b4" stroke-width="2"/><path d="M15.500 8c-3.500-4-8-4.500-10.500-2-2.800 2.800-1.800 7.500 1.500 10" fill="none" stroke="#b4b4b4" stroke-width="2.200"/></svg>
<svg class="r" style="left:791px;top:9px;" width="16" height="22" viewBox="0 0 16 22"><path d="M2 1.500v16l4-3.800 2.800 6.300 2.400-1-2.800-6.200h5.600z" fill="#f3f3f3" stroke="#c2c2c2" stroke-width="1.2"/></svg>
<svg class="r" style="left:840px;top:10px;" width="10" height="20" viewBox="0 0 10 20"><rect x="1" y="1" width="8" height="18" rx="4" fill="#b9b9b9"/><circle cx="5" cy="6.500" r="1.600" fill="#cfcfcf"/><circle cx="5" cy="13.500" r="1.600" fill="#cfcfcf"/></svg>
<svg class="r" style="left:869px;top:10px;" width="18" height="20" viewBox="0 0 18 20"><rect x="1" y="1" width="15" height="17" fill="#f0f0f0" stroke="#b4b4b4" stroke-width="1.2"/><rect x="3.500" y="3.500" width="3" height="3" fill="none" stroke="#b4b4b4"/><rect x="3.500" y="8" width="3" height="3" fill="none" stroke="#b4b4b4"/><rect x="3.500" y="12.500" width="3" height="3" fill="none" stroke="#b4b4b4"/><path d="M8.500 5h6M8.500 9.500h6M8.500 14h6" stroke="#b4b4b4" stroke-width="1.1"/></svg>
<svg class="r" style="left:903px;top:9px;" width="20" height="20" viewBox="0 0 20 20"><g transform="translate(10 10)" fill="none" stroke="#3a3a3a" stroke-width="1.5" stroke-linejoin="round"><path d="M-1.500 -8h3l.6 2.200 1.900.8 2-1.200 2.100 2.100-1.200 2 .8 1.900 2.200.6v3l-2.200.6-.8 1.900 1.200 2-2.100 2.100-2-1.200-1.900.8-.6 2.200h-3l-.6-2.200-1.900-.8-2 1.200-2.100-2.100 1.200-2-.8-1.900-2.200-.6v-3l2.200-.6.8-1.900-1.200-2 2.100-2.100 2 1.200 1.900-.8z" transform="scale(.95)"/><circle r="2.700"/></g></svg>
<svg class="r" style="left:537px;top:17px;" width="7" height="4" viewBox="0 0 7 4"><path d="M0 0h7L3.500 4z" fill="#b4b4b4"/></svg>
<svg class="r" style="left:584px;top:17px;" width="7" height="4" viewBox="0 0 7 4"><path d="M0 0h7L3.500 4z" fill="#b4b4b4"/></svg>
<svg class="r" style="left:631px;top:17px;" width="7" height="4" viewBox="0 0 7 4"><path d="M0 0h7L3.500 4z" fill="#b4b4b4"/></svg>
<svg class="r" style="left:678px;top:17px;" width="7" height="4" viewBox="0 0 7 4"><path d="M0 0h7L3.500 4z" fill="#333"/></svg>
<svg class="r" style="left:725px;top:17px;" width="7" height="4" viewBox="0 0 7 4"><path d="M0 0h7L3.500 4z" fill="#b4b4b4"/></svg>
<svg class="r" style="left:772px;top:17px;" width="7" height="4" viewBox="0 0 7 4"><path d="M0 0h7L3.500 4z" fill="#b4b4b4"/></svg>
<svg class="r" style="left:819px;top:17px;" width="7" height="4" viewBox="0 0 7 4"><path d="M0 0h7L3.500 4z" fill="#b4b4b4"/></svg>
<svg class="r" style="left:932px;top:17px;" width="7" height="4" viewBox="0 0 7 4"><path d="M0 0h7L3.500 4z" fill="#333"/></svg>
<div class="t" style="left:1131.3px;top:11.8px;font-size:14px;line-height:18px;color:#333;letter-spacing:-0.55px;">egg v9.SLDPRT *</div>
<div class="r" style="left:1423px;top:7px;width:249px;height:26px;background:#fff;border:1px solid #c9c9c9;"></div>
<svg class="r" style="left:1428px;top:11px;" width="19" height="19" viewBox="0 0 19 19"><rect width="19" height="19" rx="2" fill="#1c1c1c"/><path d="M4.500 5.500l5 4-5 4" fill="none" stroke="#fff" stroke-width="1.700"/><path d="M10 14.500h5" stroke="#fff" stroke-width="1.600"/></svg>
<div class="t" style="left:1454.3px;top:13.0px;font-size:13px;line-height:17px;color:#555;letter-spacing:-0.08px;">Search Commands</div>
<svg class="r" style="left:1634px;top:12px;" width="18" height="18" viewBox="0 0 18 18"><circle cx="7.500" cy="7" r="5.300" fill="none" stroke="#666" stroke-width="1.600"/><path d="M11.300 11l5.200 5.300" stroke="#666" stroke-width="2"/></svg>
<svg class="r" style="left:1661px;top:18px;" width="7" height="4" viewBox="0 0 7 4"><path d="M0 0h7L3.500 4z" fill="#777"/></svg>
<svg class="r" style="left:1688px;top:10px;" width="20" height="20" viewBox="0 0 20 20"><circle cx="10" cy="10" r="8.600" fill="none" stroke="#333" stroke-width="1.500"/><circle cx="10" cy="7.800" r="3" fill="none" stroke="#333" stroke-width="1.400"/><path d="M4 16c1.200-3 3.500-4 6-4s4.800 1 6 4" fill="none" stroke="#333" stroke-width="1.400"/></svg>
<svg class="r" style="left:1729px;top:10px;" width="20" height="20" viewBox="0 0 20 20"><circle cx="10" cy="10" r="8.600" fill="none" stroke="#333" stroke-width="1.500"/><text x="10" y="15" text-anchor="middle" font-family="Liberation Sans, sans-serif" font-weight="bold" font-size="14" fill="#333">?</text></svg>
<div class="r" style="left:1776px;top:24px;width:9px;height:2px;background:#333;"></div>
<svg class="r" style="left:1813px;top:12px;" width="16" height="16" viewBox="0 0 16 16"><rect x="1" y="1.500" width="14" height="12" fill="none" stroke="#333" stroke-width="1.400"/><path d="M8 1.500v12M3 7.500h4M13 7.500H9" stroke="#333" stroke-width="1.200"/><path d="M5 5.500l-2 2 2 2M11 5.500l2 2-2 2" fill="none" stroke="#333" stroke-width="1"/></svg>
<svg class="r" style="left:1855px;top:13px;" width="16" height="14" viewBox="0 0 16 14"><rect x="4.500" y="1" width="10" height="7" fill="none" stroke="#333" stroke-width="1.400"/><rect x="1" y="5.500" width="9" height="7" fill="#e9e9e9" stroke="#333" stroke-width="1.400"/></svg>
<svg class="r" style="left:1897px;top:14px;" width="12" height="12" viewBox="0 0 12 12"><path d="M1 1l10 10M11 1L1 11" stroke="#333" stroke-width="1.700"/></svg>
<!-- ribbon -->
<div class="r" style="left:251px;top:42px;width:1px;height:76px;background:#d6d6d6;"></div>
<div class="r" style="left:548px;top:42px;width:1px;height:76px;background:#d6d6d6;"></div>
<div class="r" style="left:608px;top:42px;width:1px;height:76px;background:#d6d6d6;"></div>
<div class="r" style="left:768px;top:42px;width:1px;height:76px;background:#d6d6d6;"></div>
<div class="r" style="left:998px;top:42px;width:1px;height:76px;background:#d6d6d6;"></div>
<div class="r" style="left:1128px;top:42px;width:1px;height:76px;background:#d6d6d6;"></div>
<svg class="r" style="left:33px;top:45.5px;" width="20" height="20" viewBox="0 0 20 20"><path d="M.5 2l2.500-1 2 2.500v6.500l4 3.500 5-4.500v-7.500l3.500-1 1.500 2v8l-9 7h-3l-6.500-7z" fill="#f0f0f0" stroke="#c4c4c4" stroke-width="1.100" stroke-linejoin="round"/><path d="M.5 2l2 2.500v6.500l5 4.500h2.500l7.500-6M9 13.500l2.500 2M14 9l2.500 1.500" fill="none" stroke="#c4c4c4" stroke-width=".9"/><path d="M9.500 13l4-4 2 1.500-4.500 4z" fill="#d2d2d2"/></svg>
<div class="t" style="left:28.4px;top:67.5px;font-size:13.5px;line-height:18px;color:#b3b3b3;letter-spacing:-0.52px;">Base</div>
<div class="t" style="left:9.9px;top:86.5px;font-size:13.5px;line-height:18px;color:#b3b3b3;letter-spacing:-0.06px;">Flange/Tab</div>
<svg class="r" style="left:112px;top:45.5px;" width="20" height="20" viewBox="0 0 20 20"><path d="M2 3.500l9-2.500 7 2v10l-8 5.500-8-5z" fill="#f2f2f2" stroke="#c4c4c4" stroke-width="1.100" stroke-linejoin="round"/><path d="M2 3.500l8 2 8-2.500M10 5.500v4" fill="none" stroke="#c4c4c4" stroke-width=".9"/><path d="M4 10l6-1.500 6 1.500v3l-6.500 4-5.500-3.500z" fill="#e3e3e3" stroke="#c4c4c4" stroke-width="1.100" stroke-linejoin="round"/><path d="M4 10l5.500 2.500 6.500-2.500" fill="none" stroke="#c4c4c4" stroke-width=".9"/></svg>
<div class="t" style="left:88.4px;top:67.5px;font-size:13.5px;line-height:18px;color:#b3b3b3;letter-spacing:0.55px;">Convert to</div>
<div class="t" style="left:84.9px;top:86.5px;font-size:13.5px;line-height:18px;color:#b3b3b3;letter-spacing:0.22px;">Sheet Metal</div>
<svg class="r" style="left:197px;top:45.5px;" width="20" height="20" viewBox="0 0 20 20"><path d="M7.500 .8h5l1 1.500v6l4.500 6.200-5.500 4.500h-5l-5.500-4.500 4.500-6.200v-6z" fill="#d6d6d6" stroke="#cdcdcd" stroke-width=".8"/><path d="M10 2v17" stroke="#f4f4f4" stroke-width="1.300"/><ellipse cx="10" cy="1.800" rx="2.600" ry=".9" fill="#eee"/></svg>
<div class="t" style="left:168.9px;top:67.5px;font-size:13.5px;line-height:18px;color:#b3b3b3;letter-spacing:0.27px;">Lofted-Bend</div>
<svg class="r" style="left:510.5px;top:45.5px;" width="20" height="20" viewBox="0 0 20 20"><path d="M1 5l9-3.500 9 3.500v6.500l-10 6.500-8-5.500z" fill="#efefef" stroke="#c4c4c4" stroke-width="1.100" stroke-linejoin="round"/><path d="M1 5l2.500 1.200 8-2.700 7.500 1.500M3.500 6.200v5.300l5.500 4 10-4.500M3.500 11.500l8-3.500v-4.500" fill="none" stroke="#c4c4c4" stroke-width=".9"/><path d="M3.500 6.200l8-2.700v4.500l-8 3.500z" fill="#e3e3e3"/></svg>
<div class="t" style="left:501.4px;top:67.5px;font-size:13.5px;line-height:18px;color:#b3b3b3;letter-spacing:0.17px;">Swept</div>
<div class="t" style="left:499.9px;top:86.5px;font-size:13.5px;line-height:18px;color:#b3b3b3;letter-spacing:-0.01px;">Flange</div>
<svg class="r" style="left:568px;top:45.5px;" width="20" height="20" viewBox="0 0 20 20"><path d="M4 3.500l5-3 4 1v9l5.500 3v2.500l-8 3.500-7.500-5.500v-8.500z" fill="#e3e3e3" stroke="#c4c4c4" stroke-width="1.100" stroke-linejoin="round"/><path d="M4 3.500l3.500 2 5.500-4M7.500 5.500v9.500l11-2M7.500 15l-4-1.500" fill="none" stroke="#c4c4c4" stroke-width=".9"/></svg>
<div class="t" style="left:553.4px;top:67.5px;font-size:13.5px;line-height:18px;color:#b3b3b3;letter-spacing:0.20px;">Corners</div>
<svg class="r" style="left:574px;top:106px;" width="7" height="4" viewBox="0 0 7 4"><path d="M0 0h7L3.500 4z" fill="#666"/></svg>
<svg class="r" style="left:1093px;top:45.5px;" width="20" height="20" viewBox="0 0 20 20"><path d="M7 1.500l7-1 1 6-1 5.500 4 1v3l-9 3-8-3.500v-3l5-1.500z" fill="#e3e3e3" stroke="#c4c4c4" stroke-width="1.100" stroke-linejoin="round"/><path d="M1 12.500l8 3 9-3M9 15.500v3.500M6 10.500l4 1.500 4-1" fill="none" stroke="#c4c4c4" stroke-width=".9"/><circle cx="14.500" cy="14.500" r="3.500" fill="#eee" stroke="#c4c4c4" stroke-width="1.100" stroke-linejoin="round"/><path d="M12 12l5 5" fill="none" stroke="#c4c4c4" stroke-width=".9"/></svg>
<div class="t" style="left:1094.9px;top:67.5px;font-size:13.5px;line-height:18px;color:#b3b3b3;letter-spacing:-0.40px;">No</div>
<div class="t" style="left:1083.9px;top:86.5px;font-size:13.5px;line-height:18px;color:#b3b3b3;letter-spacing:-0.02px;">Bends</div>
<svg class="r" style="left:1134px;top:45.5px;" width="20" height="20" viewBox="0 0 20 20"><path d="M2 4l8-3 8 3v9l-8 5.500-8-5z" fill="#efefef" stroke="#c4c4c4" stroke-width="1.100" stroke-linejoin="round"/><path d="M2 4l8 3.500 8-3.500M10 7.500v11M5 8l5 6 5-6" fill="none" stroke="#c4c4c4" stroke-width=".9"/></svg>
<div class="t" style="left:1134.4px;top:67.5px;font-size:13.5px;line-height:18px;color:#b3b3b3;letter-spacing:-0.40px;">Rip</div>
<svg class="r" style="left:1173px;top:45.5px;" width="20" height="20" viewBox="0 0 20 20"><path d="M6 2l8-1 1 8 3.500 2v3l-9 4-8-4v-3l5-2z" fill="#e3e3e3" stroke="#c4c4c4" stroke-width="1.100" stroke-linejoin="round"/><path d="M1.500 11l8 3.500 9-3.500M9.500 14.500v3.500M6 9l4 1 5-1" fill="none" stroke="#c4c4c4" stroke-width=".9"/></svg>
<div class="t" style="left:1165.9px;top:67.5px;font-size:13.5px;line-height:18px;color:#b3b3b3;letter-spacing:0.09px;">Insert</div>
<div class="t" style="left:1163.9px;top:86.5px;font-size:13.5px;line-height:18px;color:#b3b3b3;letter-spacing:-0.02px;">Bends</div>
<svg class="r" style="left:255px;top:44.5px;" width="20" height="20" viewBox="0 0 20 20"><path d="M1 1.500l4-1 3 3v8.500l9 1v3l-8 2-8-7z" fill="#e3e3e3" stroke="#c4c4c4" stroke-width="1.100" stroke-linejoin="round"/><path d="M1 1.500l3 3v9M4 4.500l4-1M8 12l-4 1.500 5 4.500" fill="none" stroke="#c4c4c4" stroke-width=".9"/></svg>
<div class="t" style="left:280.3px;top:45.5px;font-size:13.5px;line-height:18px;color:#b3b3b3;letter-spacing:-0.13px;">Edge Flange</div>
<svg class="r" style="left:255px;top:70.5px;" width="20" height="20" viewBox="0 0 20 20"><rect x="1.500" y="1.500" width="17" height="17" fill="#f1f1f1" stroke="#c4c4c4" stroke-width="1.100" stroke-linejoin="round"/><path d="M1.500 1.500l6.500 6.500h10.500M8 8v10.500" fill="none" stroke="#c4c4c4" stroke-width=".9"/><path d="M1.500 1.500h17v6.500h-10.500v10.500h-6.500z" fill="#e3e3e3" stroke="none"/><path d="M1.500 1.500l6.500 6.500h10.500M8 8v10.500" fill="none" stroke="#c4c4c4" stroke-width=".9"/></svg>
<div class="t" style="left:280.3px;top:71.5px;font-size:13.5px;line-height:18px;color:#b3b3b3;letter-spacing:0.29px;">Miter Flange</div>
<svg class="r" style="left:255px;top:96.5px;" width="20" height="20" viewBox="0 0 20 20"><path d="M1 3l8-2.500 8 2.500c3.500 2 3.500 9 0 11l-8 4-8-3.500v-3l8 3 6-3c1.500-1 1.500-4 0-5l-6 2-8-3z" fill="#e3e3e3" stroke="#c4c4c4" stroke-width="1.100" stroke-linejoin="round"/><path d="M1 3l8 2.500 8-2.500M1 11.500l8 3" fill="none" stroke="#c4c4c4" stroke-width=".9"/></svg>
<div class="t" style="left:280.3px;top:97.5px;font-size:13.5px;line-height:18px;color:#b3b3b3;letter-spacing:0.36px;">Hem</div>
<svg class="r" style="left:371px;top:44.5px;" width="20" height="20" viewBox="0 0 20 20"><path d="M8 1l9 1.500v3.500l-4 1.500-1 6.500-7 4-4.500-2.500v-2.500l4-2 1-6.500z" fill="#e3e3e3" stroke="#c4c4c4" stroke-width="1.100" stroke-linejoin="round"/><path d="M6 5.500l7 2M4.500 10.500l7.500 3.500M.5 13l5 2.500 6.500-4" fill="none" stroke="#c4c4c4" stroke-width=".9"/></svg>
<div class="t" style="left:395.3px;top:45.5px;font-size:13.5px;line-height:18px;color:#b3b3b3;letter-spacing:-0.28px;">Jog</div>
<svg class="r" style="left:371px;top:70.5px;" width="20" height="20" viewBox="0 0 20 20"><path d="M3 2.500l8-1.500 2 1v9l5 2.500v3l-7 3-7-4.500z" fill="#e3e3e3" stroke="#c4c4c4" stroke-width="1.100" stroke-linejoin="round"/><path d="M3 2.500l2 1.500 8-2M5 4v9.500l6 3 7-3M5 13.500l-1 2M0 11.500l19-3" fill="none" stroke="#c4c4c4" stroke-width=".9"/></svg>
<div class="t" style="left:395.3px;top:71.5px;font-size:13.5px;line-height:18px;color:#b3b3b3;letter-spacing:-0.03px;">Sketched Bend</div>
<svg class="r" style="left:371px;top:96.5px;" width="20" height="20" viewBox="0 0 20 20"><path d="M.5 9l9-6.500 10 5.500v2l-9.500 6.500-9.500-5.500z" fill="#efefef" stroke="#c4c4c4" stroke-width="1.100" stroke-linejoin="round"/><path d="M.5 9l9.500 5.500 9.500-6.500M10 14.500v2M.5 9l19-1M9.500 2.500l.5 12" fill="none" stroke="#c4c4c4" stroke-width=".9"/></svg>
<div class="t" style="left:395.3px;top:97.5px;font-size:13.5px;line-height:18px;color:#b3b3b3;letter-spacing:0.02px;">Cross-Break</div>
<svg class="r" style="left:612px;top:44.5px;" width="20" height="20" viewBox="0 0 20 20"><path d="M.5 8c1-2 4-3 5-5.500 1.500-2.500 7.500-2.500 9 0 1 2.500 4 3.500 5 5.500v1.500h-6c-1-2.500-6-2.500-7 0h-6z" fill="#e3e3e3" stroke="#c4c4c4" stroke-width="1.100" stroke-linejoin="round"/><rect x="8" y="9" width="4" height="9.500" rx="2" fill="#f0f0f0" stroke="#c4c4c4" stroke-width="1.100" stroke-linejoin="round"/></svg>
<div class="t" style="left:637.3px;top:45.5px;font-size:13.5px;line-height:18px;color:#b3b3b3;letter-spacing:0.31px;">Forming Tool</div>
<svg class="r" style="left:612px;top:70.5px;" width="20" height="20" viewBox="0 0 20 20"><path d="M1 12l8-3 4-8 6 1.500v8l-3 3-8 4.500-7-4z" fill="#e3e3e3" stroke="#c4c4c4" stroke-width="1.100" stroke-linejoin="round"/><path d="M13 1l-1 2-5 11.500 3 1.500 5-11 1-2M1 12l7 3.500 8-4.500M8 15.500v2.500" fill="none" stroke="#c4c4c4" stroke-width=".9"/></svg>
<div class="t" style="left:637.3px;top:71.5px;font-size:13.5px;line-height:18px;color:#b3b3b3;letter-spacing:0.10px;">Sheet Metal Gusset</div>
<svg class="r" style="left:612px;top:96.5px;" width="20" height="20" viewBox="0 0 20 20"><path d="M1 4l6-2.500 3 1v2l3-1.500 6 2.500v7l-6 5.500-12-6.500z" fill="#e3e3e3" stroke="#c4c4c4" stroke-width="1.100" stroke-linejoin="round"/><path d="M1 4l5 2.500v2l3 1.500v-2l4 2 6-4.500M13 10v8" fill="none" stroke="#c4c4c4" stroke-width=".9"/></svg>
<div class="t" style="left:637.3px;top:97.5px;font-size:13.5px;line-height:18px;color:#b3b3b3;letter-spacing:0.01px;">Tab and Slot</div>
<svg class="r" style="left:773px;top:44.5px;" width="20" height="20" viewBox="0 0 20 20"><rect x="2" y="1.500" width="16" height="17" rx="2.500" fill="#efefef" stroke="#c4c4c4" stroke-width="1.100" stroke-linejoin="round"/><rect x="4" y="3.500" width="12" height="13" rx="1.500" fill="#e3e3e3" stroke="#c4c4c4" stroke-width="1.100" stroke-linejoin="round"/><rect x="7.500" y="5.500" width="6" height="7" fill="#f4f4f4" stroke="#c4c4c4" stroke-width="1.100" stroke-linejoin="round"/><path d="M10.500 5.500v5.500h3" fill="none" stroke="#c4c4c4" stroke-width=".9"/></svg>
<div class="t" style="left:797.3px;top:45.5px;font-size:13.5px;line-height:18px;color:#b3b3b3;letter-spacing:0.22px;">Extruded Cut</div>
<svg class="r" style="left:773px;top:70.5px;" width="20" height="20" viewBox="0 0 20 20"><rect x="2" y="1.500" width="16" height="17" rx="2.500" fill="#efefef" stroke="#c4c4c4" stroke-width="1.100" stroke-linejoin="round"/><rect x="4" y="3.500" width="12" height="13" rx="1.500" fill="#e3e3e3" stroke="#c4c4c4" stroke-width="1.100" stroke-linejoin="round"/><circle cx="10.500" cy="10" r="3.300" fill="#f4f4f4" stroke="#c4c4c4" stroke-width="1.100" stroke-linejoin="round"/><circle cx="10.500" cy="10" r="1.200" fill="none" stroke="#c4c4c4" stroke-width=".9"/></svg>
<div class="t" style="left:797.3px;top:71.5px;font-size:13.5px;line-height:18px;color:#b3b3b3;letter-spacing:0.04px;">Simple Hole</div>
<svg class="r" style="left:773px;top:96.5px;" width="20" height="20" viewBox="0 0 20 20"><rect x="1.500" y="1.500" width="16" height="16" fill="#f1f1f1" stroke="#c4c4c4" stroke-width="1.100" stroke-linejoin="round"/><path d="M1.500 1.500l16 16M17.500 1.500l-16 16M9.500 1.500v16M1.500 9.500h16" fill="none" stroke="#c4c4c4" stroke-width=".9"/><rect x="6" y="6" width="7" height="7" fill="none" stroke="#c4c4c4" stroke-width=".9" transform="rotate(45 9.500 9.500)"/></svg>
<div class="t" style="left:797.3px;top:97.5px;font-size:13.5px;line-height:18px;color:#b3b3b3;letter-spacing:0.73px;">Vent</div>
<svg class="r" style="left:890px;top:44.5px;" width="20" height="20" viewBox="0 0 20 20"><path d="M1 13l9-9 2 2-7 8.500zM5 3l8 10-2 1.500-8-9.500z" fill="#e3e3e3" stroke="#c4c4c4" stroke-width="1.100" stroke-linejoin="round"/><path d="M3 16l8-1.500 8 2.500-3 1.500z" fill="#efefef" stroke="#c4c4c4" stroke-width="1.100" stroke-linejoin="round"/></svg>
<div class="t" style="left:915.3px;top:45.5px;font-size:13.5px;line-height:18px;color:#b3b3b3;letter-spacing:0.44px;">Normal Cut</div>
<svg class="r" style="left:1002px;top:44.5px;" width="20" height="20" viewBox="0 0 20 20"><path d="M1 6l8-3.500 9 2v7.500l-8 5.500-9-4.500z" fill="#f0f0f0" stroke="#c4c4c4" stroke-width="1.100" stroke-linejoin="round"/><path d="M1 6l9 3 8-4.500M10 9v8.500" fill="none" stroke="#c4c4c4" stroke-width=".9"/><path d="M4 8.500l6 2 5-3v4l-5 3.500-6-3z" fill="#e3e3e3" stroke="#c4c4c4" stroke-width="1.100" stroke-linejoin="round"/></svg>
<div class="t" style="left:1027.3px;top:45.5px;font-size:13.5px;line-height:18px;color:#b3b3b3;letter-spacing:0.44px;">Unfold</div>
<svg class="r" style="left:1002px;top:70.5px;" width="20" height="20" viewBox="0 0 20 20"><path d="M2 7l5-5 5 1v7l6 3v3l-8 3-8-4.500z" fill="#e3e3e3" stroke="#c4c4c4" stroke-width="1.100" stroke-linejoin="round"/><path d="M2 7l5 2.500v8M7 9.500l5-6.500M7 13l5-3" fill="none" stroke="#c4c4c4" stroke-width=".9"/><circle cx="6" cy="6" r="2.500" fill="#eee" stroke="#c4c4c4" stroke-width="1.100" stroke-linejoin="round"/></svg>
<div class="t" style="left:1027.3px;top:71.5px;font-size:13.5px;line-height:18px;color:#b3b3b3;letter-spacing:0.32px;">Fold</div>
<svg class="r" style="left:1002px;top:96.5px;" width="20" height="20" viewBox="0 0 20 20"><path d="M.5 10l8-5 11 3v2.500l-9 5.500-10-4z" fill="#efefef" stroke="#c4c4c4" stroke-width="1.100" stroke-linejoin="round"/><path d="M.5 10l10 3.500 9-5.500M10.500 13.500v2.500M4 7.800l10 3.500M8 12.600l6-7" fill="none" stroke="#c4c4c4" stroke-width=".9"/></svg>
<div class="t" style="left:1027.3px;top:97.5px;font-size:13.5px;line-height:18px;color:#b3b3b3;letter-spacing:0.32px;">Flatten</div>
<svg class="r" style="left:1900px;top:103px;" width="11" height="8" viewBox="0 0 11 8"><path d="M1 7l4.500-4.500L10 7" fill="none" stroke="#222" stroke-width="1.800"/></svg>
<!-- tabs -->
<div class="r" style="left:0px;top:121px;width:74px;height:29px;background:#d5d5d5;border:1px solid #7a7a7a;box-sizing:border-box;border-left:none;"></div>
<div class="t" style="left:8.8px;top:126.5px;font-size:14.5px;line-height:19px;color:#1a1a1a;letter-spacing:-0.13px;">Features</div>
<div class="r" style="left:73px;top:121px;width:64px;height:29px;background:#d5d5d5;border:1px solid #7a7a7a;box-sizing:border-box;"></div>
<div class="t" style="left:83.8px;top:126.5px;font-size:14.5px;line-height:19px;color:#1a1a1a;letter-spacing:-0.20px;">Sketch</div>
<div class="r" style="left:136px;top:121px;width:76px;height:29px;background:#d5d5d5;border:1px solid #7a7a7a;box-sizing:border-box;"></div>
<div class="t" style="left:145.8px;top:126.5px;font-size:14.5px;line-height:19px;color:#1a1a1a;letter-spacing:0.01px;">Surfaces</div>
<div class="r" style="left:212px;top:121px;width:105px;height:28px;background:#f7f7f7;"></div>
<div class="r" style="left:211px;top:149px;width:107px;height:1px;background:#808080;"></div>
<div class="t" style="left:223.3px;top:126.5px;font-size:14.5px;line-height:19px;color:#1a1a1a;letter-spacing:0.37px;font-weight:bold;">Sheet Metal</div>
<div class="r" style="left:317px;top:121px;width:92px;height:29px;background:#d5d5d5;border:1px solid #7a7a7a;box-sizing:border-box;"></div>
<div class="t" style="left:325.8px;top:126.5px;font-size:14.5px;line-height:19px;color:#1a1a1a;letter-spacing:0.70px;">Mold Tools</div>
<div class="r" style="left:408px;top:121px;width:126px;height:29px;background:#d5d5d5;border:1px solid #7a7a7a;box-sizing:border-box;"></div>
<div class="t" style="left:419.8px;top:126.5px;font-size:14.5px;line-height:19px;color:#1a1a1a;letter-spacing:0.41px;">Mesh Modeling</div>
<div class="r" style="left:533px;top:121px;width:75px;height:29px;background:#d5d5d5;border:1px solid #7a7a7a;box-sizing:border-box;"></div>
<div class="t" style="left:542.3px;top:126.5px;font-size:14.5px;line-height:19px;color:#1a1a1a;letter-spacing:0.13px;">Evaluate</div>
<div class="r" style="left:607px;top:121px;width:172px;height:29px;background:#d5d5d5;border:1px solid #7a7a7a;box-sizing:border-box;"></div>
<div class="t" style="left:618.8px;top:126.5px;font-size:14.5px;line-height:19px;color:#1a1a1a;letter-spacing:-0.13px;">SOLIDWORKS Add-Ins</div>
<div class="r" style="left:778px;top:121px;width:158px;height:29px;background:#d5d5d5;border:1px solid #7a7a7a;box-sizing:border-box;"></div>
<div class="t" style="left:792.8px;top:126.5px;font-size:14.5px;line-height:19px;color:#1a1a1a;letter-spacing:-0.40px;">SOLIDWORKS CAM</div>
<div class="r" style="left:935px;top:121px;width:191px;height:29px;background:#d5d5d5;border:1px solid #7a7a7a;box-sizing:border-box;"></div>
<div class="t" style="left:949.3px;top:126.5px;font-size:14.5px;line-height:19px;color:#1a1a1a;letter-spacing:-0.33px;">SOLIDWORKS CAM TBM</div>
<!-- panel -->
<div class="r" style="left:0px;top:150px;width:304px;height:840px;background:#f7f7f7;"></div>
<div class="r" style="left:0px;top:152px;width:302px;height:1px;background:#c8c8c8;"></div>
<div class="r" style="left:0px;top:172px;width:303px;height:1px;background:#d8d8d8;"></div>
<div class="r" style="left:304px;top:150px;width:1px;height:840px;background:#707070;"></div>
<svg class="r" style="left:147px;top:158px;" width="9" height="9" viewBox="0 0 9 9"><circle cx="4.500" cy="4.500" r="2.300" fill="#ddd" stroke="#aaa" stroke-width="1"/></svg>
<div class="r" style="left:0px;top:178px;width:303px;height:25px;background:#d3d3d3;"></div>
<div class="r" style="left:0px;top:202px;width:303px;height:1px;background:#8f8f8f;"></div>
<div class="r" style="left:0px;top:177px;width:303px;height:1px;background:#c8c8c8;"></div>
<div class="r" style="left:39px;top:178px;width:1px;height:24px;background:#8f8f8f;"></div>
<div class="r" style="left:79px;top:178px;width:1px;height:24px;background:#8f8f8f;"></div>
<div class="r" style="left:119px;top:178px;width:1px;height:24px;background:#8f8f8f;"></div>
<div class="r" style="left:159px;top:178px;width:1px;height:24px;background:#8f8f8f;"></div>
<div class="r" style="left:199px;top:178px;width:1px;height:24px;background:#8f8f8f;"></div>
<div class="r" style="left:239px;top:178px;width:1px;height:24px;background:#8f8f8f;"></div>
<div class="r" style="left:40px;top:177px;width:39px;height:26px;background:#f7f7f7;"></div>
<svg class="r" style="left:8px;top:180px;" width="24" height="20" viewBox="0 0 24 20"><path d="M4.500 7.500L6 3.500L11 1L16 3V7L21 9.500V14L13 19L4.500 12Z" fill="#f5c81e" stroke="#8f6c00" stroke-width="1.100" stroke-linejoin="round"/><path d="M6 3.500L11 5.500L16 3L11 1Z" fill="#ffe477" stroke="#8f6c00" stroke-width=".8" stroke-linejoin="round"/><path d="M11 10L16 7L21 9.500L13.500 14.500Z" fill="#ffe066" stroke="#8f6c00" stroke-width=".8" stroke-linejoin="round"/><path d="M11 5.500V10L13.500 14.500V19M4.500 7.500L11 10" fill="none" stroke="#8f6c00" stroke-width=".9"/></svg>
<svg class="r" style="left:50px;top:181px;" width="20" height="19" viewBox="0 0 20 19"><rect x="1" y="1" width="17" height="17" rx="1.500" fill="#fff" stroke="#17375e" stroke-width="1.500"/><rect x="1" y="1" width="17" height="4" fill="#2e75b6" stroke="#17375e" stroke-width="1"/><rect x="3.500" y="7.500" width="3" height="2" fill="#2e75b6"/><rect x="3.500" y="11" width="3" height="2" fill="#2e75b6"/><rect x="3.500" y="14.500" width="3" height="2" fill="#2e75b6"/><path d="M8.500 8.500h7M8.500 12h7M8.500 15.500h7" stroke="#17375e" stroke-width="1.300"/></svg>
<svg class="r" style="left:90px;top:180px;" width="20" height="21" viewBox="0 0 20 21"><rect x="3" y="1.500" width="6" height="5" fill="#fff" stroke="#333" stroke-width="1.200"/><rect x="10" y="7.500" width="6" height="5" fill="#fff" stroke="#333" stroke-width="1.200"/><rect x="10" y="14" width="6" height="5" fill="#fff" stroke="#333" stroke-width="1.200"/><path d="M5 6.500v10h5M5 10h5M9 4h4v3.500" fill="none" stroke="#333" stroke-width="1.200"/></svg>
<svg class="r" style="left:129px;top:180px;" width="22" height="22" viewBox="0 0 22 22"><circle cx="11" cy="11" r="6.500" fill="none" stroke="#111" stroke-width="2"/><path d="M11 1.500v19M1.500 11h19" stroke="#111" stroke-width="1.800"/><circle cx="11" cy="11" r="1.300" fill="#fff"/></svg>
<svg class="r" style="left:170px;top:180px;" width="20" height="20" viewBox="0 0 20 20"><defs><radialGradient id="ball" cx=".4" cy=".3" r=".7"><stop offset="0" stop-color="#fff" stop-opacity=".7"/><stop offset=".5" stop-color="#fff" stop-opacity="0"/><stop offset="1" stop-color="#000" stop-opacity=".25"/></radialGradient></defs><circle cx="10" cy="10" r="9" fill="#f0c000"/><path d="M10 10L3 3.500A9 9 0 0 1 16.500 3.800z" fill="#e02020"/><path d="M10 10l6.500-6.200A9 9 0 0 1 16 16.700z" fill="#e02020"/><path d="M10 10L3 3.500A9 9 0 0 0 3.600 16.300z" fill="#2a6fd6"/><path d="M10 10l-6.400 6.300A9 9 0 0 0 10 19z" fill="#30a030"/><path d="M10 10v9a9 9 0 0 0 6-2.300z" fill="#f0c000"/><ellipse cx="13.500" cy="6.500" rx="2.600" ry="4.200" transform="rotate(-35 13.500 6.500)" fill="#222"/><circle cx="10" cy="10" r="9" fill="url(#ball)"/></svg>
<div class="r" style="left:209px;top:180px;width:22px;height:21px;background:#a9a9a9;"></div>
<svg class="r" style="left:209px;top:180px;" width="22" height="21" viewBox="0 0 22 21"><path d="M2 4l9-2.500 9 3.500v11l-9 3.500-9-4.500z" fill="#e8f3fa" stroke="#3b87b8" stroke-width="1"/><path d="M2 4l9 4 9-3M11 8v11.500" fill="none" stroke="#3b87b8" stroke-width="1"/><path d="M11 8l9-3v7l-9 3.500z" fill="#fff" stroke="#777" stroke-width=".9"/><path d="M2 4l9 4v7.500l-9-4z" fill="#8ec8e8" stroke="#3b87b8" stroke-width=".8"/></svg>
<svg class="r" style="left:249px;top:181px;" width="12" height="20" viewBox="0 0 12 20"><path d="M10 1.500h-6.500a2 2 0 0 0-2 2v13a2 2 0 0 0 2 2h6.500" fill="#e8e8e8" stroke="#111" stroke-width="2"/><rect x="7" y="11" width="5" height="7" fill="#4a9cd0"/></svg>
<div class="r" style="left:259px;top:178px;width:23px;height:24px;background:#f4f4f4;border:1px solid #cfcfcf;box-sizing:border-box;"></div>
<div class="r" style="left:283px;top:178px;width:20px;height:24px;background:#f4f4f4;border:1px solid #cfcfcf;box-sizing:border-box;"></div>
<svg class="r" style="left:268px;top:186px;" width="6" height="9" viewBox="0 0 6 9"><path d="M5.500 0v9L0 4.500z" fill="#111"/></svg>
<svg class="r" style="left:291px;top:186px;" width="6" height="9" viewBox="0 0 6 9"><path d="M.5 0v9L6 4.500z" fill="#111"/></svg>
<svg class="r" style="left:10px;top:212px;" width="18" height="20" viewBox="0 0 18 20"><path d="M8.500 1L15.500 6.500L16.500 10.500L10.500 18.500H8L1.500 10.500L2.500 6.500Z" fill="#f4f4f4" stroke="#666" stroke-width="1" stroke-linejoin="round"/><path d="M8.500 1L7 9.500L8 18.500M8.500 1L12.500 10L10.500 18.500M2.500 6.500L7 9.500L12.500 10L15.500 6.500" fill="none" stroke="#9a9a9a" stroke-width=".7"/><path d="M1.500 10.200C5 13.200 12.500 13.400 16.500 10.200" fill="none" stroke="#2f8fcf" stroke-width="1.900"/></svg>
<div class="t" style="left:37.7px;top:212.5px;font-size:16px;line-height:21px;color:#1a1a1a;letter-spacing:-0.73px;font-weight:bold;">Parting Line</div>
<svg class="r" style="left:274px;top:214px;" width="16" height="16" viewBox="0 0 16 16"><circle cx="8" cy="8" r="6.600" fill="#fff" stroke="#1f3f66" stroke-width="1.200"/><text x="8" y="12" text-anchor="middle" font-family="Liberation Sans, sans-serif" font-weight="bold" font-size="11" fill="#1f3f66">?</text></svg>
<svg class="r" style="left:8px;top:248px;" width="16" height="14" viewBox="0 0 16 14"><path d="M1.500 7.500l4.500 4.500 8.500-10" fill="none" stroke="#2e9e1f" stroke-width="2.400"/></svg>
<svg class="r" style="left:42px;top:249px;" width="14" height="13" viewBox="0 0 14 13"><path d="M1.500 1l11 11M12.500 1l-11 11" stroke="#d42a1a" stroke-width="2.200"/></svg>
<div class="r" style="left:0px;top:277px;width:302px;height:1px;background:#ababab;"></div>
<div class="r" style="left:282px;top:279px;width:20px;height:711px;background:#efefef;"></div>
<div class="r" style="left:0px;top:279px;width:278px;height:1px;background:#b4b4b4;"></div>
<div class="r" style="left:289px;top:300px;width:6px;height:529px;background:#868686;"></div>
<div class="t" style="left:6.8px;top:288.0px;font-size:13px;line-height:17px;color:#333;letter-spacing:-0.21px;font-weight:bold;">Message</div>
<svg class="r" style="left:264px;top:291px;" width="12" height="8" viewBox="0 0 12 8"><path d="M1 7l5-5 5 5" fill="none" stroke="#5a5a5a" stroke-width="1.700"/></svg>
<div class="r" style="left:3px;top:311px;width:275px;height:60px;background:#80ff80;"></div>
<div class="t" style="left:6.9px;top:312.5px;font-size:12.5px;line-height:16px;color:#111;letter-spacing:0.33px;">The parting line is complete.</div>
<div class="t" style="left:6.9px;top:329.5px;font-size:12.5px;line-height:16px;color:#111;letter-spacing:0.41px;">The mold can be separated into core and</div>
<div class="t" style="left:6.9px;top:346.5px;font-size:12.5px;line-height:16px;color:#111;letter-spacing:0.19px;">cavity.</div>
<div class="r" style="left:3px;top:376px;width:275px;height:1px;background:#c8c8c8;"></div>
<div class="t" style="left:6.8px;top:384.0px;font-size:13px;line-height:17px;color:#333;letter-spacing:0.06px;font-weight:bold;">Mold Parameters</div>
<svg class="r" style="left:264px;top:387px;" width="12" height="8" viewBox="0 0 12 8"><path d="M1 7l5-5 5 5" fill="none" stroke="#5a5a5a" stroke-width="1.700"/></svg>
<div class="r" style="left:7px;top:407px;width:30px;height:30px;background:#f9f9f9;border:1px solid #8a8a8a;box-sizing:border-box;"></div>
<svg class="r" style="left:11px;top:411px;" width="22" height="22" viewBox="0 0 22 22"><path d="M3.500 11.500l9-8M7 3.500h5.500V9" fill="none" stroke="#111" stroke-width="2"/><path d="M18.500 10l-8 8M16 18h-5.500v-5.500" fill="none" stroke="#d5d5d5" stroke-width="2.200"/></svg>
<div class="r" style="left:40px;top:408px;width:13px;height:26px;background:#ff80c0;"></div>
<div class="r" style="left:54px;top:407px;width:203px;height:28px;background:#fff;border:1px solid #8a93a8;box-sizing:border-box;"></div>
<div class="t" style="left:58.4px;top:411.8px;font-size:12.5px;line-height:16px;color:#111;letter-spacing:0.15px;">Front Plane</div>
<svg class="r" style="left:12px;top:449px;" width="20" height="22" viewBox="0 0 20 22"><path d="M2 2v18h17" fill="none" stroke="#1c5f8f" stroke-width="1.600"/><path d="M4.500 8c4-1 8 2 9 9" fill="none" stroke="#111" stroke-width="1.800"/><path d="M3 10.500l1-4.500 4 2.500z" fill="#111"/><path d="M15.500 17.500l-4-1 3.500-2.500z" fill="#111"/><text x="15" y="8" font-family="Liberation Sans, sans-serif" font-size="7.500" font-weight="bold" fill="#222">A</text></svg>
<div class="r" style="left:41px;top:446px;width:197px;height:27px;background:#fff;border-bottom:1px solid #9a9a9a;box-sizing:border-box;"></div>
<div class="t" style="left:45.9px;top:449.8px;font-size:12.5px;line-height:16px;color:#111;letter-spacing:0.41px;">1.00deg</div>
<div class="r" style="left:238px;top:446px;width:19px;height:13px;background:#f3f3f3;border:1px solid #c4c4c4;box-sizing:border-box;border-bottom-color:#888;"></div>
<div class="r" style="left:238px;top:460px;width:19px;height:13px;background:#f3f3f3;border:1px solid #c4c4c4;box-sizing:border-box;border-bottom-color:#888;"></div>
<svg class="r" style="left:244px;top:450px;" width="7" height="4" viewBox="0 0 7 4"><path d="M0 4h7L3.500 0z" fill="#111"/></svg>
<svg class="r" style="left:244px;top:465px;" width="7" height="4" viewBox="0 0 7 4"><path d="M0 0h7L3.500 4z" fill="#111"/></svg>
<div class="r" style="left:82px;top:484px;width:135px;height:28px;background:#f8f8f8;border:1px solid #dedede;box-sizing:border-box;border-radius:4px;"></div>
<div class="t" style="left:109.4px;top:490.5px;font-size:12.5px;line-height:16px;color:#8f8f8f;letter-spacing:0.29px;">Draft Analysis</div>
<div class="r" style="left:41px;top:522px;width:50px;height:29px;background:#00ff00;border:1px solid #e4e4e4;box-sizing:border-box;border-bottom-color:#bdbdbd;"></div>
<div class="r" style="left:96px;top:522px;width:50px;height:29px;background:#ffff00;border:1px solid #e4e4e4;box-sizing:border-box;border-bottom-color:#bdbdbd;"></div>
<div class="r" style="left:151px;top:522px;width:50px;height:29px;background:#ff0000;border:1px solid #e4e4e4;box-sizing:border-box;border-bottom-color:#bdbdbd;"></div>
<div class="r" style="left:208px;top:522px;width:50px;height:29px;background:#0000ff;border:1px solid #e4e4e4;box-sizing:border-box;border-bottom-color:#bdbdbd;"></div>
<div class="r" style="left:40px;top:561px;width:16px;height:16px;background:#fff;border:1px solid #333;box-sizing:border-box;border-radius:3px;"></div>
<div class="t" style="left:58.4px;top:561.5px;font-size:12.5px;line-height:16px;color:#111;letter-spacing:0.30px;">Use for Core/Cavity Split</div>
<div class="r" style="left:40px;top:589px;width:16px;height:16px;background:#fff;border:1px solid #333;box-sizing:border-box;border-radius:3px;"></div>
<div class="t" style="left:58.4px;top:589.5px;font-size:12.5px;line-height:16px;color:#111;letter-spacing:0.25px;">Split faces</div>
<svg class="r" style="left:40px;top:617px;" width="16" height="16" viewBox="0 0 16 16"><circle cx="8" cy="8" r="5.500" fill="#fff" stroke="#c9c9c9" stroke-width="4"/><circle cx="8" cy="8" r="7.500" fill="none" stroke="#bbb" stroke-width=".6"/></svg>
<div class="t" style="left:58.4px;top:617.5px;font-size:12.5px;line-height:16px;color:#6d6d6d;letter-spacing:0.60px;">At +/- draft transition</div>
<svg class="r" style="left:40px;top:645px;" width="16" height="16" viewBox="0 0 16 16"><circle cx="8" cy="8" r="7.200" fill="#fff" stroke="#c4c4c4" stroke-width="1"/></svg>
<div class="t" style="left:58.4px;top:645.5px;font-size:12.5px;line-height:16px;color:#6d6d6d;letter-spacing:0.38px;">At specified angle</div>
<div class="r" style="left:3px;top:673px;width:275px;height:1px;background:#c8c8c8;"></div>
<div class="t" style="left:6.8px;top:682.0px;font-size:13px;line-height:17px;color:#333;letter-spacing:-0.06px;font-weight:bold;">Parting Lines</div>
<svg class="r" style="left:264px;top:685px;" width="12" height="8" viewBox="0 0 12 8"><path d="M1 7l5-5 5 5" fill="none" stroke="#5a5a5a" stroke-width="1.700"/></svg>
<svg class="r" style="left:13px;top:710px;" width="18" height="20" viewBox="0 0 18 20"><path d="M8.500 1L15.500 6.500L16.500 10.500L10.500 18.500H8L1.500 10.500L2.500 6.500Z" fill="#f4f4f4" stroke="#666" stroke-width="1" stroke-linejoin="round"/><path d="M8.500 1L7 9.500L8 18.500M8.500 1L12.500 10L10.500 18.500M2.500 6.500L7 9.500L12.500 10L15.500 6.500" fill="none" stroke="#9a9a9a" stroke-width=".7"/><path d="M1.500 10.200C5 13.200 12.500 13.400 16.500 10.200" fill="none" stroke="#2f8fcf" stroke-width="1.900"/></svg>
<div class="r" style="left:41px;top:706px;width:14px;height:283px;background:#8000ff;"></div>
<div class="r" style="left:56px;top:705px;width:206px;height:284px;background:#cfe4f7;border:2px solid #55a8e8;box-sizing:border-box;border-bottom:none;"></div>
<div class="t" style="left:60.4px;top:709.0px;font-size:13px;line-height:17px;color:#111;letter-spacing:0.32px;">Edge&lt;1&gt;</div>
<div class="t" style="left:60.4px;top:729.0px;font-size:13px;line-height:17px;color:#111;letter-spacing:0.32px;">Edge&lt;2&gt;</div>
<div class="t" style="left:60.4px;top:749.0px;font-size:13px;line-height:17px;color:#111;letter-spacing:0.32px;">Edge&lt;3&gt;</div>
<div class="t" style="left:60.4px;top:769.0px;font-size:13px;line-height:17px;color:#111;letter-spacing:0.32px;">Edge&lt;4&gt;</div>
<div class="t" style="left:60.4px;top:789.0px;font-size:13px;line-height:17px;color:#111;letter-spacing:0.32px;">Edge&lt;5&gt;</div>
<div class="t" style="left:60.4px;top:809.0px;font-size:13px;line-height:17px;color:#111;letter-spacing:0.32px;">Edge&lt;6&gt;</div>
<div class="t" style="left:60.4px;top:829.0px;font-size:13px;line-height:17px;color:#111;letter-spacing:0.32px;">Edge&lt;7&gt;</div>
<div class="t" style="left:60.4px;top:849.0px;font-size:13px;line-height:17px;color:#111;letter-spacing:0.32px;">Edge&lt;8&gt;</div>
<div class="t" style="left:60.4px;top:869.0px;font-size:13px;line-height:17px;color:#111;letter-spacing:0.32px;">Edge&lt;9&gt;</div>
<div class="t" style="left:60.4px;top:889.0px;font-size:13px;line-height:17px;color:#111;letter-spacing:0.24px;">Edge&lt;10&gt;</div>
<div class="t" style="left:60.4px;top:909.0px;font-size:13px;line-height:17px;color:#111;letter-spacing:0.38px;">Edge&lt;11&gt;</div>
<div class="t" style="left:60.4px;top:929.0px;font-size:13px;line-height:17px;color:#111;letter-spacing:0.24px;">Edge&lt;12&gt;</div>
<div class="t" style="left:60.4px;top:949.0px;font-size:13px;line-height:17px;color:#111;letter-spacing:0.24px;">Edge&lt;13&gt;</div>
<div class="t" style="left:60.4px;top:969.0px;font-size:13px;line-height:17px;color:#111;letter-spacing:0.24px;">Edge&lt;14&gt;</div>
<!-- heads-up -->
<svg class="r" style="left:310px;top:161px;" width="7" height="10" viewBox="0 0 7 10"><path d="M1 0v10l5.500-5z" fill="#111"/></svg>
<svg class="r" style="left:326px;top:156px;transform:scale(.92);transform-origin:0 0;" width="24" height="20" viewBox="0 0 24 20"><path d="M4.500 7.500L6 3.500L11 1L16 3V7L21 9.500V14L13 19L4.500 12Z" fill="#f5c81e" stroke="#8f6c00" stroke-width="1.100" stroke-linejoin="round"/><path d="M6 3.500L11 5.500L16 3L11 1Z" fill="#ffe477" stroke="#8f6c00" stroke-width=".8" stroke-linejoin="round"/><path d="M11 10L16 7L21 9.500L13.500 14.500Z" fill="#ffe066" stroke="#8f6c00" stroke-width=".8" stroke-linejoin="round"/><path d="M11 5.500V10L13.500 14.500V19M4.500 7.500L11 10" fill="none" stroke="#8f6c00" stroke-width=".9"/></svg>
<div class="t" style="left:350.2px;top:158.5px;font-size:15px;line-height:20px;color:#111;letter-spacing:0.02px;">egg v9 (Default) &lt;&lt;...</div>
<svg class="r" style="left:948px;top:155px;" width="21" height="21" viewBox="0 0 21 21"><circle cx="12" cy="7.500" r="6" fill="#f4f8fb" stroke="#555" stroke-width="1.200"/><path d="M7.500 12l-5.500 5.500" stroke="#5b9cc4" stroke-width="3.200" stroke-linecap="round"/><path d="M12 3.500l1.500 1.800h-3zM12 11.500l1.500-1.800h-3zM8 7.500l1.800-1.500v3zM16 7.500l-1.800-1.500v3z" fill="#555"/></svg>
<svg class="r" style="left:974px;top:155px;" width="21" height="21" viewBox="0 0 21 21"><rect x="7" y="1.500" width="12.500" height="11.500" fill="none" stroke="#333" stroke-width="1" stroke-dasharray="3 1.500"/><circle cx="12" cy="7.500" r="6" fill="#f4f8fb" stroke="#555" stroke-width="1.200"/><path d="M7.500 12l-5.500 5.500" stroke="#5b9cc4" stroke-width="3.200" stroke-linecap="round"/></svg>
<svg class="r" style="left:1001px;top:156px;" width="20" height="19" viewBox="0 0 20 19"><path d="M2 12l11-9.500 4 3.500-10 10c-2 1.500-6-1.500-5-4z" fill="#eee" stroke="#666" stroke-width="1.100"/><ellipse cx="4.500" cy="13.500" rx="2.200" ry="3.200" transform="rotate(-40 4.500 13.500)" fill="#fff" stroke="#666"/><path d="M19 14h-7.500M14 11l-3.500 3 3.500 3z" fill="#2c7fb8" stroke="#2c7fb8" stroke-width="1.400"/></svg>
<svg class="r" style="left:1027px;top:156px;" width="20" height="19" viewBox="0 0 20 19"><path d="M2 6c0-3 6-4.500 9-3.500v4c2-1.500 7-1.500 7 1v8c0 2-7 3.500-9 2.500s-7-.5-7-3z" fill="#ececec" stroke="#d2d2d2" stroke-width="1"/><path d="M3 8l4 9M5 6l4 10" stroke="#d6d6d6"/></svg>
<svg class="r" style="left:1053px;top:155px;" width="22" height="21" viewBox="0 0 22 21"><path d="M1.500 7h12v12h-12z" fill="#8ec6e6" stroke="#2b6f9c" stroke-width="1.100"/><path d="M1.500 7l5.500-5.500h12l-5.500 5.500M19 1.500v12l-5.500 5.500" fill="#fff" stroke="#444" stroke-width="1"/><path d="M10 1.500v4M16.500 8v4" stroke="#222" stroke-width="1"/><path d="M8.500 3.500l1.500 1.800 1.500-1.800zM15 10l1.500 1.800 1.500-1.800z" fill="#222"/></svg>
<svg class="r" style="left:1094px;top:155px;" width="19" height="21" viewBox="0 0 19 21"><path d="M1.500 4l7-2.500 9 2v13l-8 3-8-3.500z" fill="#fff" stroke="#555" stroke-width="1"/><path d="M1.500 4l8 2.500v13l-8-3.500z" fill="#7fbde0" stroke="#2b6f9c" stroke-width="1"/><path d="M9.500 6.500l4-1.200v13l-4 1.200z" fill="#b9dcf0"/><path d="M9.500 6.500l8-3" stroke="#555"/></svg>
<div class="r" style="left:1130px;top:152px;width:40px;height:27px;background:#fbfbfb;border:1px solid #b5b5b5;box-sizing:border-box;"></div>
<div class="r" style="left:1130px;top:152px;width:27px;height:27px;background:#c9c9c9;border:1px solid #9c9c9c;box-sizing:border-box;"></div>
<svg class="r" style="left:1134px;top:156px;" width="20" height="18" viewBox="0 0 20 18"><path d="M1 9c4-7 14-7 18 0-4 7-14 7-18 0z" fill="#e6e6e6" stroke="#222" stroke-width="1.300"/><circle cx="10" cy="9" r="4.300" fill="#222"/><path d="M10 4.500a4.500 4.500 0 0 1 0 9z" fill="#888"/><path d="M10 .5v17" stroke="#111" stroke-width="1.200"/></svg>
<svg class="r" style="left:1174px;top:155px;" width="20" height="21" viewBox="0 0 20 21"><circle cx="9" cy="8" r="7" fill="#e9e9e9" stroke="#dcdcdc"/><path d="M11 14l6 1-4 5z" fill="#e2e2e2" stroke="#d4d4d4"/></svg>
<svg class="r" style="left:1199px;top:155px;" width="20" height="21" viewBox="0 0 20 21"><rect x="1" y="9" width="18" height="11" fill="#e6e6e6" stroke="#dadada"/><circle cx="10" cy="8" r="6.500" fill="#ececec" stroke="#dcdcdc"/><path d="M2 20l3-4h10l3 4" fill="none" stroke="#d4d4d4"/></svg>
<svg class="r" style="left:1240px;top:157px;" width="19" height="18" viewBox="0 0 19 18"><rect x="1" y="1" width="17" height="11.500" fill="#e4e4e4" stroke="#555" stroke-width="1.300"/><path d="M9.500 12.500v3.500M5.500 16.500h8" stroke="#555" stroke-width="1.600"/></svg>
<svg class="r" style="left:1079px;top:163px;" width="7" height="4" viewBox="0 0 7 4"><path d="M0 0h7L3.500 4z" fill="#999"/></svg>
<svg class="r" style="left:1119px;top:163px;" width="7" height="4" viewBox="0 0 7 4"><path d="M0 0h7L3.500 4z" fill="#999"/></svg>
<svg class="r" style="left:1159px;top:163px;" width="7" height="4" viewBox="0 0 7 4"><path d="M0 0h7L3.500 4z" fill="#333"/></svg>
<svg class="r" style="left:1225px;top:163px;" width="7" height="4" viewBox="0 0 7 4"><path d="M0 0h7L3.500 4z" fill="#aaa"/></svg>
<svg class="r" style="left:1265px;top:163px;" width="7" height="4" viewBox="0 0 7 4"><path d="M0 0h7L3.500 4z" fill="#999"/></svg>
<svg class="r" style="left:1791px;top:131px;" width="13" height="13" viewBox="0 0 13 13"><rect x=".5" y=".5" width="11" height="11" fill="none" stroke="#9a9a9a"/><path d="M6.500 3v6L3 6z" fill="#9a9a9a"/></svg>
<svg class="r" style="left:1817px;top:131px;" width="13" height="13" viewBox="0 0 13 13"><rect x=".5" y=".5" width="11" height="11" fill="none" stroke="#9a9a9a"/><path d="M5.500 3v6L9 6z" fill="#9a9a9a"/></svg>
<div class="r" style="left:1844px;top:140px;width:10px;height:2px;background:#9a9a9a;"></div>
<svg class="r" style="left:1868px;top:130px;" width="15" height="14" viewBox="0 0 15 14"><rect x="4.500" y="1" width="9" height="6.500" fill="none" stroke="#9a9a9a" stroke-width="1.300"/><rect x="1" y="5.500" width="8.500" height="6.500" fill="#fff" stroke="#9a9a9a" stroke-width="1.300"/></svg>
<svg class="r" style="left:1895px;top:131px;" width="12" height="12" viewBox="0 0 12 12"><path d="M1 1l10 10M11 1L1 11" stroke="#9a9a9a" stroke-width="1.300"/></svg>
<div class="r" style="left:1919px;top:122px;width:1px;height:58px;background:#9a9a9a;"></div>
<svg class="r" style="left:1810px;top:185px;" width="30" height="24" viewBox="0 0 30 24"><path d="M3 12l9 9L27 3.500" fill="none" stroke="#cfe8cb" stroke-width="5"/></svg>
<svg class="r" style="left:1855px;top:215px;" width="25" height="25" viewBox="0 0 25 25"><path d="M4 4l17 17M21 4L4 21" stroke="#f6cccc" stroke-width="6" stroke-linecap="round"/></svg>
<div class="r" style="left:1887px;top:180px;width:33px;height:211px;background:#d3d3d3;border:1px solid #9a9a9a;box-sizing:border-box;border-right:none;"></div>
<div class="r" style="left:1888px;top:210px;width:32px;height:1px;background:#9a9a9a;"></div>
<div class="r" style="left:1888px;top:240px;width:32px;height:1px;background:#9a9a9a;"></div>
<div class="r" style="left:1888px;top:270px;width:32px;height:1px;background:#9a9a9a;"></div>
<div class="r" style="left:1888px;top:300px;width:32px;height:1px;background:#9a9a9a;"></div>
<div class="r" style="left:1888px;top:330px;width:32px;height:1px;background:#9a9a9a;"></div>
<div class="r" style="left:1888px;top:360px;width:32px;height:1px;background:#9a9a9a;"></div>
<div class="r" style="left:1888px;top:331px;width:32px;height:29px;background:#fafafa;"></div>
<svg class="r" style="left:1894px;top:185px;" width="20" height="20" viewBox="0 0 20 20"><defs><radialGradient id="glb" cx=".4" cy=".3" r=".8"><stop offset="0" stop-color="#3f83b8"/><stop offset="1" stop-color="#0b3558"/></radialGradient></defs><circle cx="10" cy="10" r="9.500" fill="url(#glb)"/><path d="M8 6v8l6-4z" fill="none" stroke="#cfe3f2" stroke-width="1.200"/><circle cx="10" cy="10" r="6.500" fill="none" stroke="#7fb0d2" stroke-width=".7"/></svg>
<svg class="r" style="left:1894px;top:216px;" width="20" height="19" viewBox="0 0 20 19"><path d="M1.500 9.500L10 1.500l8.500 8" fill="none" stroke="#1d5f8f" stroke-width="2.200"/><path d="M4 9v8.500h12V9l-6-5.500z" fill="#fff" stroke="#222" stroke-width="1.200"/><rect x="8.500" y="11.500" width="3.500" height="6" fill="#fff" stroke="#222" stroke-width="1.100"/></svg>
<svg class="r" style="left:1896px;top:245px;" width="16" height="20" viewBox="0 0 16 20"><path d="M1.500 4.500l3-2v13l-3 2zM6 4l3-2.500v14l-3 2.500zM10.500 4.500l3-2v13l-3 2z" fill="#fff" stroke="#333" stroke-width="1.100"/><path d="M1.500 4.500c0-1.500 3-2.500 3-2M6 4c0-1.500 3-3 3-2.500M10.500 4.500c0-1.500 3-2.500 3-2" fill="none" stroke="#333"/></svg>
<svg class="r" style="left:1894px;top:276px;" width="21" height="18" viewBox="0 0 21 18"><path d="M1.500 16.500v-14h6l2 2.500h7v3" fill="#fff" stroke="#333" stroke-width="1.200"/><path d="M1.500 16.500l4-8.500h14.500l-4 8.500z" fill="#f2f2f2" stroke="#333" stroke-width="1.200"/></svg>
<svg class="r" style="left:1895px;top:306px;" width="19" height="18" viewBox="0 0 19 18"><rect x="1" y="1" width="17" height="16" rx="2" fill="#fff" stroke="#333" stroke-width="1.300"/><path d="M4 4h8v3h-2.500v4h3.500v3h-10v-3h3.500v-4h-2.500z" fill="#f5c518" stroke="#8a6a00" stroke-width=".8"/><rect x="14" y="4" width="2.500" height="2.500" fill="#555"/><rect x="14" y="9" width="2.500" height="6" fill="#999"/></svg>
<svg class="r" style="left:1895px;top:336px;" width="18" height="18" viewBox="0 0 18 18"><circle cx="9" cy="9" r="8" fill="#e8c020"/><path d="M9 9L2.500 4.500A8 8 0 0 1 9 1z" fill="#2a6fd6"/><path d="M9 9V1a8 8 0 0 1 7.500 5.500z" fill="#e03020"/><path d="M9 9l7.500-3.500A8 8 0 0 1 12 16.400z" fill="#e03020"/><path d="M9 9L2.500 4.500A8 8 0 0 0 5 15.900z" fill="#2a6fd6"/><path d="M9 9L5 15.900a8 8 0 0 0 7 .5z" fill="#38a838"/><circle cx="9" cy="9" r="8" fill="url(#ball)"/></svg>
<svg class="r" style="left:1895px;top:366px;" width="19" height="19" viewBox="0 0 19 19"><rect x="1" y="1" width="17" height="17" fill="#fff" stroke="#17375e" stroke-width="1.300"/><rect x="1" y="1" width="17" height="3.500" fill="#2e75b6"/><rect x="3.500" y="7" width="3" height="2" fill="#2e75b6"/><rect x="3.500" y="10.500" width="3" height="2" fill="#2e75b6"/><rect x="3.500" y="14" width="3" height="2" fill="#2e75b6"/><path d="M8.500 8h7M8.500 11.500h7M8.500 15h7" stroke="#17375e" stroke-width="1.200"/></svg>
<div class="r" style="left:302px;top:531px;width:14px;height:49px;background:#f7f7f7;border:1px solid #707070;box-sizing:border-box;border-left:none;"></div>
<svg class="r" style="left:305px;top:551px;" width="8" height="8" viewBox="0 0 8 8"><circle cx="4" cy="4" r="2.600" fill="#d8d8d8" stroke="#aaa" stroke-width=".8"/></svg>
<div class="r" style="left:661px;top:497px;width:120px;height:32px;background:#fff;border:1px solid #111;box-sizing:border-box;"></div>
<div class="r" style="left:662px;top:498px;width:82px;height:30px;background:#f5f5f5;"></div>
<div class="r" style="left:744px;top:498px;width:1px;height:30px;background:#111;"></div>
<div class="t" style="left:669.4px;top:505.5px;font-size:12.5px;line-height:16px;color:#111;letter-spacing:0.08px;">Parting Line:</div>
<div class="t" style="left:749.4px;top:505.5px;font-size:12.5px;line-height:16px;color:#111;letter-spacing:-0.40px;">15</div>
<svg class="r" style="left:778px;top:510px;" width="8" height="8" viewBox="0 0 8 8"><circle cx="3.500" cy="3.500" r="2.600" fill="#fff" stroke="#222" stroke-width="1"/></svg>
<!-- bottom -->
<div class="r" style="left:0px;top:990px;width:1920px;height:18px;background:#f3f3f3;"></div>
<div class="r" style="left:0px;top:990px;width:1920px;height:1px;background:#9a9a9a;"></div>
<div class="r" style="left:2px;top:991px;width:81px;height:17px;background:#a3a3b3;border-top:1px solid #555;box-sizing:border-box;"></div>
<div class="r" style="left:22px;top:992px;width:1px;height:16px;background:#8c8c9c;"></div>
<div class="r" style="left:42px;top:992px;width:1px;height:16px;background:#8c8c9c;"></div>
<div class="r" style="left:62px;top:992px;width:1px;height:16px;background:#8c8c9c;"></div>
<svg class="r" style="left:7px;top:993.5px;" width="14" height="14" viewBox="0 0 14 14"><path d="M2 1v12" stroke="#c9c9d3" stroke-width="1.500"/><path d="M12 1v12L4 7z" fill="#c9c9d3"/></svg>
<svg class="r" style="left:26px;top:993.5px;" width="12" height="14" viewBox="0 0 12 14"><path d="M10 1v12L2 7z" fill="#c9c9d3"/></svg>
<svg class="r" style="left:48px;top:993.5px;" width="12" height="14" viewBox="0 0 12 14"><path d="M2 1v12l8-6z" fill="#c9c9d3"/></svg>
<svg class="r" style="left:65px;top:993.5px;" width="14" height="14" viewBox="0 0 14 14"><path d="M12 1v12" stroke="#c9c9d3" stroke-width="1.500"/><path d="M2 1v12l8-6z" fill="#c9c9d3"/></svg>
<div class="t" style="left:97.7px;top:990.6px;font-size:15.5px;line-height:20px;color:#111;letter-spacing:1.15px;font-weight:bold;">Model</div>
<div class="r" style="left:158px;top:990px;width:145px;height:19px;background:#d3d3d3;border:1px solid #8f8f8f;box-sizing:border-box;"></div>
<div class="t" style="left:171.2px;top:990.6px;font-size:15.5px;line-height:20px;color:#1a1a1a;letter-spacing:0.31px;">Motion Study 1</div>
</body></html>
